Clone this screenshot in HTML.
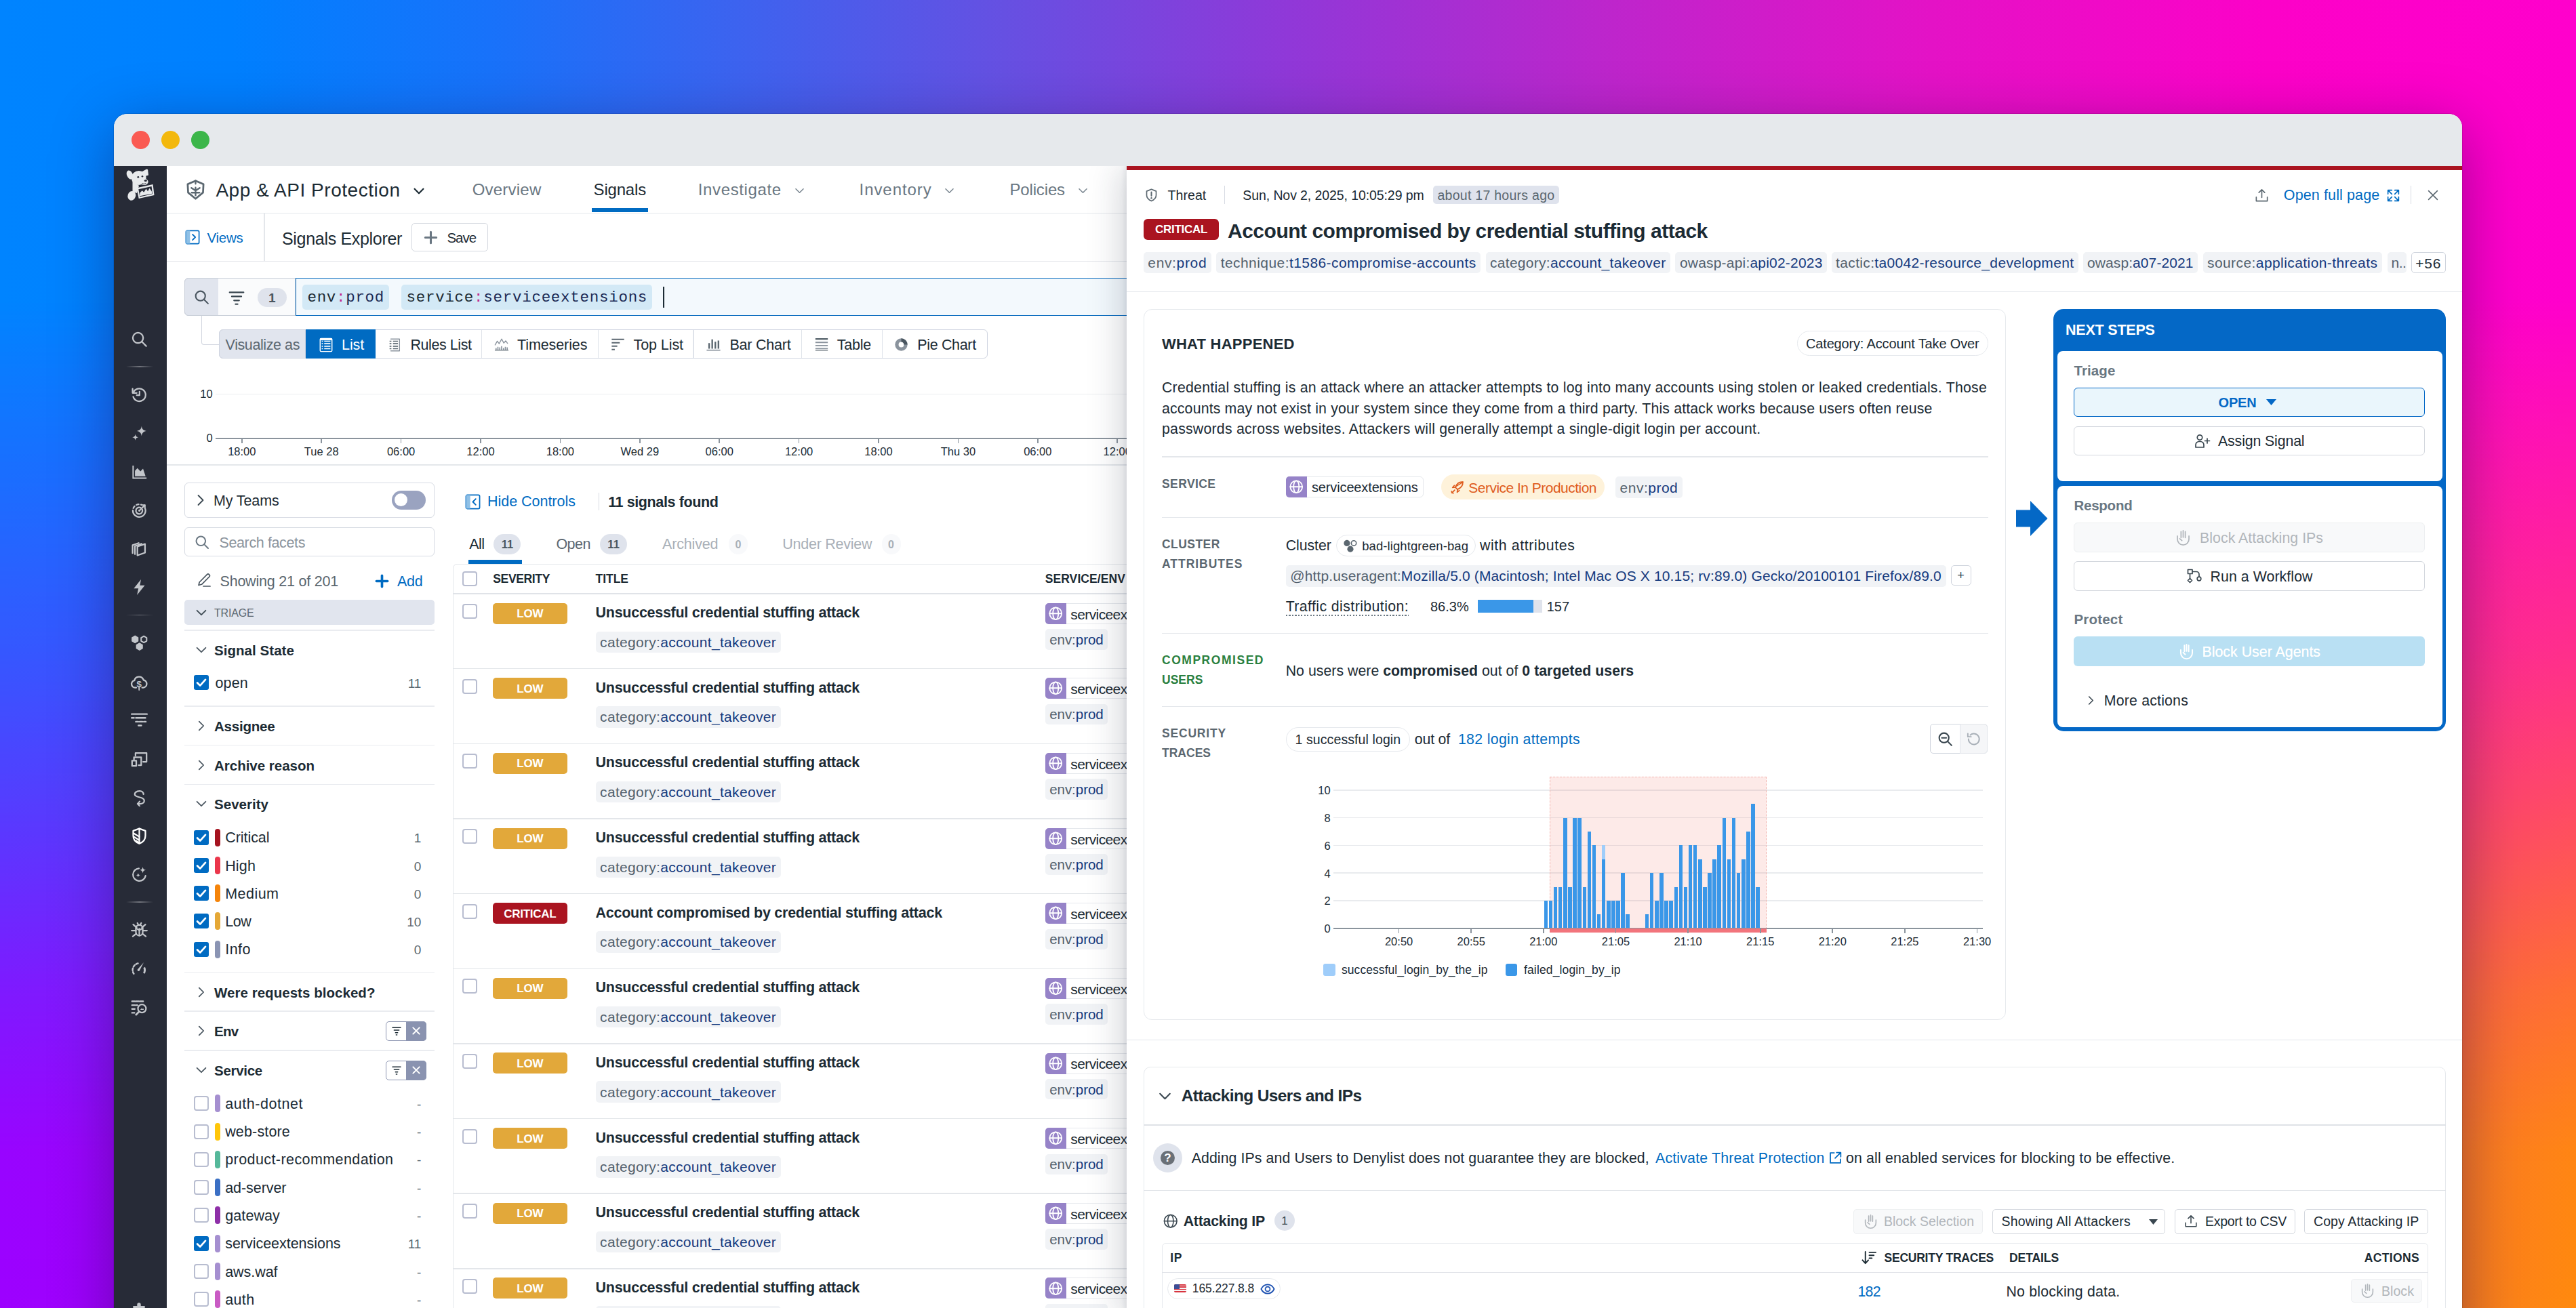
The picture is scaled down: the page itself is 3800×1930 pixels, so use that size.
<!DOCTYPE html>
<html lang="en"><head><meta charset="utf-8"><title>Signals Explorer</title>
<style>
html,body{margin:0;padding:0;width:3800px;height:1930px;overflow:hidden;}
body{position:relative;font-family:"Liberation Sans",sans-serif;background:#7a3fe0;}
#root{position:relative;width:3800px;height:1930px;overflow:hidden;}
.b{position:absolute;box-sizing:border-box;display:block;}
.t{position:absolute;white-space:nowrap;display:block;}
</style></head>
<body>
<div id="root">
<div class="b" style="left:0;top:0;width:3800px;height:1930px;background:linear-gradient(90deg,#9d00ff 0%,#b012ea 30%,#e63c8c 70%,#ff8a0e 100%);"></div>
<div class="b" style="left:0;top:0;width:3800px;height:1930px;background:linear-gradient(90deg,#0084ff 0%,#0080ff 9%,#1872fa 19%,#3a64f0 28%,#6650e2 39%,#9038d8 50%,#bc26cc 62%,#e412c6 75%,#fc02c8 88%,#ff00cc 100%);-webkit-mask-image:linear-gradient(180deg,#000 0%,#000 23%,rgba(0,0,0,.81) 38%,rgba(0,0,0,.66) 50%,rgba(0,0,0,.47) 61%,rgba(0,0,0,.19) 76%,rgba(0,0,0,.03) 88%,transparent 100%);mask-image:linear-gradient(180deg,#000 0%,#000 23%,rgba(0,0,0,.81) 38%,rgba(0,0,0,.66) 50%,rgba(0,0,0,.47) 61%,rgba(0,0,0,.19) 76%,rgba(0,0,0,.03) 88%,transparent 100%);"></div>
<div class="b" style="left:168px;top:168px;width:3464px;height:1900px;border-radius:20px 20px 0 0;background:#fff;box-shadow:0 22px 90px rgba(20,0,60,.4),0 0 0 1px rgba(0,0,0,.1);overflow:hidden;"><div class="b" style="left:0;top:0;width:100%;height:77px;background:#e6e9ec;"></div><div class="b" style="left:0;top:77px;width:78px;height:1823px;background:#272b37;"></div></div>
<div class="b" style="left:193.8px;top:193.1px;width:27.0px;height:27.0px;background:#fa5a52;border-radius:14px;"></div>
<div class="b" style="left:237.8px;top:193.1px;width:27.0px;height:27.0px;background:#f3b80c;border-radius:14px;"></div>
<div class="b" style="left:281.5px;top:193.1px;width:27.0px;height:27.0px;background:#3cb64a;border-radius:14px;"></div>
<svg class="b" style="left:185.0px;top:248.0px;" width="46" height="50" viewBox="185 248 46 50"><g fill="#e8eaec"><ellipse cx="191.500" cy="258" rx="4.300" ry="6.800" transform="rotate(-24 191.500 258)"/><ellipse cx="204.800" cy="262.500" rx="10.800" ry="10.500"/><path d="M209 253.500 215.800 249.800c1.500-.6 2.200.2 2.400 1.500l.8 7.200-5 1.500z"/><ellipse cx="212.800" cy="268.300" rx="5.800" ry="4.800"/><path d="M195.500 266 205 274l-3 11-6.500-2z"/><ellipse cx="194.300" cy="288.800" rx="5.800" ry="7" transform="rotate(18 194.300 288.800)"/><path d="M201.600 277.300 225.600 272l1.900 15.900-22.800 5.200z"/></g><path d="M204.300 279.200 223.600 274.900l1.300 11.300-18.600 4.200z" fill="#272b37"/><path d="M206.200 289.300l.2-4.800 3.300-3.200 2.600 2.400 3.200-5.200 2.600 3.800 2.400-4.600 3.300 4.500.4 3.500z" fill="#e8eaec"/><circle cx="203.800" cy="261.300" r="1.400" fill="#272b37"/><circle cx="210" cy="260.300" r="1.300" fill="#272b37"/><ellipse cx="214.800" cy="266.500" rx="2.100" ry="1.600" fill="#272b37"/><path d="M209.500 270.500c2 1.300 4 1.200 6-.2" fill="none" stroke="#272b37" stroke-width="1"/></svg>
<svg class="b" style="left:191.5px;top:487.0px;" width="27" height="27" viewBox="0 0 24 24"><circle cx="10.3" cy="10.3" r="6.8" fill="none" stroke="#c3c6cb" stroke-width="2" stroke-linecap="round" stroke-linejoin="round" /><path d="M15.4 15.4 21 21" fill="none" stroke="#c3c6cb" stroke-width="2" stroke-linecap="round" stroke-linejoin="round" /></svg>
<div class="b" style="left:186.0px;top:540.3px;width:40.0px;height:1.6px;background:linear-gradient(90deg,rgba(255,255,255,0),rgba(255,255,255,.35),rgba(255,255,255,0));"></div>
<svg class="b" style="left:191.5px;top:568.9px;" width="27" height="27" viewBox="0 0 24 24"><path d="M4.2 9.2A8.3 8.3 0 1 1 4 14.5" fill="none" stroke="#c3c6cb" stroke-width="2" stroke-linecap="round" stroke-linejoin="round" /><path d="M3.2 4.2v5.4h5.4" fill="none" stroke="#c3c6cb" stroke-width="2" stroke-linecap="round" stroke-linejoin="round" /><path d="M12.3 7.8v4.8H8.6" fill="none" stroke="#c3c6cb" stroke-width="2" stroke-linecap="round" stroke-linejoin="round" /></svg>
<svg class="b" style="left:191.5px;top:625.9px;" width="27" height="27" viewBox="0 0 24 24"><path d="M15 2.5c.6 4 2.2 5.7 6.3 6.4-4.1.7-5.7 2.4-6.3 6.4-.6-4-2.2-5.700-6.300-6.400C12.800 8.200 14.400 6.500 15 2.500z" fill="#c3c6cb"/><path d="M6.800 13c.4 2.600 1.400 3.600 4 4-2.600.4-3.600 1.400-4 4-.4-2.600-1.400-3.600-4-4 2.600-.4 3.600-1.400 4-4z" fill="#c3c6cb"/></svg>
<svg class="b" style="left:191.5px;top:683.0px;" width="27" height="27" viewBox="0 0 24 24"><path d="M3 3.500h1.800V19H21.500v1.800H3z" fill="#c3c6cb"/><path d="M6.300 17.500V10.500l3.200-3.700 4 4.400 3.400-3.600 3.300 9.900z" fill="#c3c6cb"/></svg>
<svg class="b" style="left:191.5px;top:740.0px;" width="27" height="27" viewBox="0 0 24 24"><path d="M19.200 8.200A8.300 8.300 0 1 1 15.600 4.600" fill="none" stroke="#c3c6cb" stroke-width="2" stroke-linecap="round" stroke-linejoin="round" stroke-dasharray='30 3 3 3 3 3'/><path d="M15.800 10.400A4.300 4.300 0 1 1 13.600 8.100" fill="none" stroke="#c3c6cb" stroke-width="2" stroke-linecap="round" stroke-linejoin="round" /><circle cx="12" cy="12" r="1.300" fill="#c3c6cb"/><path d="M12 12 19 5" fill="none" stroke="#c3c6cb" stroke-width="2" stroke-linecap="round" stroke-linejoin="round" /><path d="M16.500 4.500h3v3" fill="none" stroke="#c3c6cb" stroke-width="1.6" stroke-linecap="round" stroke-linejoin="round" /></svg>
<svg class="b" style="left:191.5px;top:797.0px;" width="27" height="27" viewBox="0 0 24 24"><path d="M9.500 8.500 19.500 5v11.500L9.500 20z" fill="none" stroke="#c3c6cb" stroke-width="2" stroke-linecap="round" stroke-linejoin="round" /><path d="M6.300 18.500V7.800L15 4.800" fill="none" stroke="#c3c6cb" stroke-width="2" stroke-linecap="round" stroke-linejoin="round" /><path d="M3.200 17V6.600l8-2.800" fill="none" stroke="#c3c6cb" stroke-width="2" stroke-linecap="round" stroke-linejoin="round" /></svg>
<svg class="b" style="left:191.5px;top:853.0px;" width="27" height="27" viewBox="0 0 24 24"><path d="M14.200 1.800 4.800 13.600h6L9 22.200l10.200-12.600h-6.400z" fill="#c3c6cb"/></svg>
<div class="b" style="left:186.0px;top:906.6px;width:40.0px;height:1.6px;background:linear-gradient(90deg,rgba(255,255,255,0),rgba(255,255,255,.35),rgba(255,255,255,0));"></div>
<svg class="b" style="left:191.5px;top:935.2px;" width="27" height="27" viewBox="0 0 24 24"><polygon points="6.4,2.3 10.9,4.9 10.9,10.1 6.4,12.7 1.9,10.1 1.9,4.9" fill="#c3c6cb"/><polygon points="12.2,11.8 16.7,14.4 16.7,19.6 12.2,22.2 7.7,19.6 7.7,14.4" fill="#c3c6cb"/><polygon points="18.0,3.3 21.6,5.4 21.6,9.6 18.0,11.7 14.4,9.6 14.4,5.4" fill="none" stroke="#c3c6cb" stroke-width="1.8" stroke-linecap="round" stroke-linejoin="round" /></svg>
<svg class="b" style="left:191.0px;top:992.5px;" width="28" height="28" viewBox="0 0 24 24"><path d="M8.500 18.500H7a4.500 4.500 0 0 1-.8-8.900 6 6 0 0 1 11.600-.6A4.800 4.800 0 0 1 17.500 18.500H16" fill="none" stroke="#c3c6cb" stroke-width="2" stroke-linecap="round" stroke-linejoin="round" /><text x="12.200" y="17.800" font-size="11.500" font-weight="700" text-anchor="middle" fill="#c3c6cb" font-family="Liberation Sans,sans-serif">$</text><path d="M12.200 18.500v3" fill="none" stroke="#c3c6cb" stroke-width="1.6" stroke-linecap="round" stroke-linejoin="round" /></svg>
<svg class="b" style="left:191.5px;top:1048.0px;" width="27" height="27" viewBox="0 0 24 24"><path d="M2 5h20" fill="none" stroke="#c3c6cb" stroke-width="2.2" stroke-linecap="round" stroke-linejoin="round" stroke-linecap='butt'/><path d="M2 10h3M7.500 10h12.500" fill="none" stroke="#c3c6cb" stroke-width="2.2" stroke-linecap="round" stroke-linejoin="round" stroke-linecap='butt'/><path d="M7.500 15h3M12.500 15h3.500M18 15h2.500" fill="none" stroke="#c3c6cb" stroke-width="2.2" stroke-linecap="round" stroke-linejoin="round" stroke-linecap='butt'/><path d="M11 20h3.500" fill="none" stroke="#c3c6cb" stroke-width="2.2" stroke-linecap="round" stroke-linejoin="round" stroke-linecap='butt'/></svg>
<svg class="b" style="left:191.5px;top:1105.8px;" width="27" height="27" viewBox="0 0 24 24"><path d="M7 8V4.500h14.500v11.500H17" fill="none" stroke="#c3c6cb" stroke-width="2" stroke-linecap="round" stroke-linejoin="round" stroke-linejoin='miter'/><path d="M5 13v-3h9.500v10.500H11" fill="none" stroke="#c3c6cb" stroke-width="2" stroke-linecap="round" stroke-linejoin="round" stroke-linejoin='miter'/><rect x="2.500" y="14.500" width="5.500" height="7" fill="none" stroke="#c3c6cb" stroke-width="2" stroke-linecap="round" stroke-linejoin="round" stroke-linejoin='miter'/></svg>
<svg class="b" style="left:191.5px;top:1162.8px;" width="27" height="27" viewBox="0 0 24 24"><path d="M17.500 8A5 4.200 0 0 0 12.500 3.600C7.500 3.600 6 6.500 6 8c0 5 12.500 2.500 12.500 8.500 0 2-2 4-5.500 4h-3" fill="none" stroke="#c3c6cb" stroke-width="2" stroke-linecap="round" stroke-linejoin="round" /><path d="M12.500 17.300 9.600 20.500l2.900 3" fill="none" stroke="#c3c6cb" stroke-width="1.8" stroke-linecap="round" stroke-linejoin="round" /></svg>
<svg class="b" style="left:191.5px;top:1220.2px;" width="27" height="27" viewBox="0 0 24 24"><path d="M12 2.300 20 5.200v6.500c0 5-3.500 8.500-8 10.200-4.500-1.700-8-5.200-8-10.200V5.200z" fill="none" stroke="#ffffff" stroke-width="2" stroke-linecap="round" stroke-linejoin="round" /><path d="M12 2.300V21.900" fill="none" stroke="#ffffff" stroke-width="2" stroke-linecap="round" stroke-linejoin="round" /><path d="M4.500 8.500 12 13M4.800 13 12 17.500M7.500 18.300 12 21" fill="none" stroke="#ffffff" stroke-width="2" stroke-linecap="round" stroke-linejoin="round" /></svg>
<svg class="b" style="left:191.5px;top:1276.5px;" width="27" height="27" viewBox="0 0 24 24"><path d="M20.200 13.500A8.300 8.300 0 1 1 11.500 3.800" fill="none" stroke="#c3c6cb" stroke-width="2" stroke-linecap="round" stroke-linejoin="round" /><path d="M16.500 2c.4 2.600 1.500 3.600 4 4-2.500.4-3.600 1.400-4 4-.4-2.600-1.500-3.600-4-4 2.500-.4 3.600-1.400 4-4z" fill="#c3c6cb"/><path d="M10.500 10c.3 1.800 1 2.500 2.800 2.800-1.800.3-2.500 1-2.800 2.800-.3-1.800-1-2.500-2.800-2.800 1.800-.3 2.500-1 2.800-2.800z" fill="#c3c6cb"/></svg>
<div class="b" style="left:186.0px;top:1330.2px;width:40.0px;height:1.6px;background:linear-gradient(90deg,rgba(255,255,255,0),rgba(255,255,255,.35),rgba(255,255,255,0));"></div>
<svg class="b" style="left:191.5px;top:1358.1px;" width="27" height="27" viewBox="0 0 24 24"><path d="M7.500 10.500a4.500 4.500 0 0 1 9 0v5a4.500 4.500 0 0 1-9 0z" fill="none" stroke="#c3c6cb" stroke-width="2" stroke-linecap="round" stroke-linejoin="round" /><path d="M12 11v9" fill="none" stroke="#c3c6cb" stroke-width="2" stroke-linecap="round" stroke-linejoin="round" /><path d="M8 10.500 12 13l4-2.500" fill="none" stroke="#c3c6cb" stroke-width="1.8" stroke-linecap="round" stroke-linejoin="round" /><path d="M2 13.500h5.500M16.500 13.500H22M3.500 21l4.500-3.500M20.500 21 16 17.500M4 5.500l4.500 4M20 5.500l-4.500 4M9.500 3.500l1.300 2.500M14.500 3.500 13.200 6" fill="none" stroke="#c3c6cb" stroke-width="2" stroke-linecap="round" stroke-linejoin="round" /></svg>
<svg class="b" style="left:191.5px;top:1415.9px;" width="27" height="27" viewBox="0 0 24 24"><path d="M4.800 18.500A8.800 8.800 0 0 1 11 4.800" fill="none" stroke="#c3c6cb" stroke-width="2.2" stroke-linecap="round" stroke-linejoin="round" stroke-dasharray='2.600 2.200' stroke-linecap='butt'/><path d="M17.800 3.500 12.300 14.500a1.600 1.600 0 0 1-2.800-1.300z" fill="#c3c6cb"/><path d="M19.500 9.500c1.500 3 1.300 6-.3 9l-2.200-1.200c1-2.300 1.200-4.300.3-6.500z" fill="#c3c6cb"/></svg>
<svg class="b" style="left:191.5px;top:1472.7px;" width="27" height="27" viewBox="0 0 24 24"><path d="M2.500 4h3.500M7.500 4h4M13 4h4M2.500 9h3.500M7.500 9h2M2.500 14h3.500M2.500 19h3" fill="none" stroke="#c3c6cb" stroke-width="2.2" stroke-linecap="round" stroke-linejoin="round" stroke-linecap='butt'/><circle cx="15.500" cy="13.500" r="5.300" fill="none" stroke="#c3c6cb" stroke-width="2" stroke-linecap="round" stroke-linejoin="round" /><path d="M11.600 17.600 7.800 21.500" fill="none" stroke="#c3c6cb" stroke-width="2.4" stroke-linecap="round" stroke-linejoin="round" /><path d="M13.300 15l1.500-2 1.200 1.200 1-1.200 1 2z" fill="#c3c6cb"/></svg>
<svg class="b" style="left:192.0px;top:1915.0px;" width="26" height="26" viewBox="0 0 24 24"><path d="M4 11h5.500V9.300a2.500 2.500 0 1 1 5 0V11H20v11H4z" fill="#c3c6cb"/></svg>
<svg class="b" style="left:273.0px;top:263.5px;" width="31" height="32" viewBox="0 0 24 24"><path d="M12 1.700 21 5.700 20.500 15.200 12 22.300 3.500 15.200 3 5.700z" fill="none" stroke="#5b6770" stroke-width="2.1" stroke-linecap="round" stroke-linejoin="round" /><path d="M12 9.500v9M12 13 7.200 9.800M12 13l4.800-3.200M7.500 15.300h9M12 1.700v3.500" fill="none" stroke="#5b6770" stroke-width="1.8" stroke-linecap="round" stroke-linejoin="round" /></svg>
<span class="t" style="letter-spacing:0.53px;top:262.7px;font-size:28px;line-height:36px;color:#1c2b34;left:318.4px;">App &amp; API Protection</span>
<svg class="b" style="left:607.0px;top:270.5px;" width="22" height="22" viewBox="0 0 24 24"><path d="M5 8.500 12 15.500 19 8.500" fill="none" stroke="#1c2b34" stroke-width="2.4" stroke-linecap="round" stroke-linejoin="round" /></svg>
<span class="t" style="letter-spacing:0.22px;top:264.1px;font-size:24px;line-height:31px;color:#6a7782;left:696.7px;">Overview</span>
<span class="t" style="letter-spacing:-0.19px;top:264.1px;font-size:24px;line-height:31px;color:#1c2b34;left:875.6px;">Signals</span>
<div class="b" style="left:873.0px;top:307.2px;width:82.8px;height:5.8px;background:#006bc2;"></div>
<span class="t" style="letter-spacing:0.63px;top:264.1px;font-size:24px;line-height:31px;color:#6a7782;left:1029.8px;">Investigate</span>
<svg class="b" style="left:1169.5px;top:272.0px;" width="19" height="19" viewBox="0 0 24 24"><path d="M5 8.500 12 15.500 19 8.500" fill="none" stroke="#7b8791" stroke-width="2" stroke-linecap="round" stroke-linejoin="round" /></svg>
<span class="t" style="letter-spacing:0.92px;top:264.1px;font-size:24px;line-height:31px;color:#6a7782;left:1267.6px;">Inventory</span>
<svg class="b" style="left:1390.5px;top:272.0px;" width="19" height="19" viewBox="0 0 24 24"><path d="M5 8.500 12 15.500 19 8.500" fill="none" stroke="#7b8791" stroke-width="2" stroke-linecap="round" stroke-linejoin="round" /></svg>
<span class="t" style="letter-spacing:-0.14px;top:264.1px;font-size:24px;line-height:31px;color:#6a7782;left:1489.4px;">Policies</span>
<svg class="b" style="left:1587.5px;top:272.0px;" width="19" height="19" viewBox="0 0 24 24"><path d="M5 8.500 12 15.500 19 8.500" fill="none" stroke="#7b8791" stroke-width="2" stroke-linecap="round" stroke-linejoin="round" /></svg>
<div class="b" style="left:246.0px;top:313.9px;width:1416.0px;height:1.5px;background:#e4e7eb;"></div>
<svg class="b" style="left:272.5px;top:339.0px;" width="22" height="22" viewBox="0 0 24 24"><rect x="1.500" y="1.500" width="21" height="21" rx="2" fill="none" stroke="#006bc2" stroke-width="1.8" stroke-linecap="round" stroke-linejoin="round" /><rect x="1.500" y="1.500" width="6.500" height="21" fill="#8fc0e6"/><path d="M12 7.500 16.500 12 12 16.500" fill="none" stroke="#006bc2" stroke-width="2" stroke-linecap="round" stroke-linejoin="round" /></svg>
<span class="t" style="letter-spacing:-0.21px;top:337.0px;font-size:20.5px;line-height:27px;color:#006bc2;left:305.4px;">Views</span>
<div class="b" style="left:389.2px;top:315.0px;width:1.5px;height:70.5px;background:#e4e7eb;"></div>
<span class="t" style="letter-spacing:-0.31px;top:335.8px;font-size:25px;line-height:32px;color:#1c2b34;left:416.0px;">Signals Explorer</span>
<div class="b" style="left:606.5px;top:328.5px;width:113.7px;height:42.8px;background:#fff;border:1.5px solid #d3d7de;border-radius:5px;"></div>
<svg class="b" style="left:623.5px;top:338.5px;" width="23" height="23" viewBox="0 0 24 24"><path d="M12 3.500v17M3.500 12h17" fill="none" stroke="#6a7782" stroke-width="3.2" stroke-linecap="round" stroke-linejoin="round" stroke-linecap='butt'/></svg>
<span class="t" style="letter-spacing:-0.96px;top:337.0px;font-size:20.5px;line-height:27px;color:#1c2b34;left:659.4px;">Save</span>
<div class="b" style="left:246.0px;top:384.8px;width:1416.0px;height:1.5px;background:#e4e7eb;"></div>
<div class="b" style="left:271.8px;top:409.8px;width:1400.0px;height:56.0px;background:#f3f9fd;border:1.5px solid #c9cfd9;border-radius:6px 0 0 6px;"></div>
<div class="b" style="left:271.8px;top:409.8px;width:51.0px;height:56.0px;background:#e1e5ee;border:1.5px solid #c9cfd9;border-radius:6px 0 0 6px;"></div>
<div class="b" style="left:322.2px;top:409.8px;width:114.0px;height:56.0px;background:#fafbfc;border:1.5px solid #c9cfd9;border-left:none;"></div>
<div class="b" style="left:435.8px;top:409.8px;width:1300.0px;height:56.0px;background:#f3f9fd;border:1.8px solid #0a6cbf;"></div>
<svg class="b" style="left:285.0px;top:426.0px;" width="25" height="25" viewBox="0 0 24 24"><circle cx="10.3" cy="10.3" r="6.8" fill="none" stroke="#4a5660" stroke-width="2" stroke-linecap="round" stroke-linejoin="round" /><path d="M15.4 15.4 21 21" fill="none" stroke="#4a5660" stroke-width="2" stroke-linecap="round" stroke-linejoin="round" /></svg>
<svg class="b" style="left:336.0px;top:425.5px;" width="26" height="26" viewBox="0 0 24 24"><path d="M2.500 5h19M5.500 10.500h13M8.500 16h7M10.500 21h3" fill="none" stroke="#3a4750" stroke-width="2" stroke-linecap="round" stroke-linejoin="round" stroke-linecap='butt'/></svg>
<div class="b" style="left:379.9px;top:424.6px;width:43.0px;height:28.0px;background:#dfe3ec;border-radius:14px;"></div>
<span class="t" style="top:426.8px;font-size:19px;line-height:25px;color:#4a5660;font-weight:700;left:401.4px;transform:translateX(-50%);">1</span>
<div class="b" style="left:446.2px;top:420.2px;width:127.5px;height:36.8px;background:#d3e9f6;border-radius:5px;"></div>
<span class="t" style="letter-spacing:0.68px;top:425.1px;font-size:22.5px;line-height:29px;color:#1c2b34;font-family:'Liberation Mono',monospace;left:453.5px;"><span style="color:#1c2b34;">env</span><span style="color:#c0288f;">:</span><span style="color:#1b2a55;">prod</span></span>
<div class="b" style="left:592.4px;top:420.2px;width:369.6px;height:36.8px;background:#d3e9f6;border-radius:5px;"></div>
<span class="t" style="letter-spacing:0.72px;top:425.1px;font-size:22.5px;line-height:29px;color:#1c2b34;font-family:'Liberation Mono',monospace;left:599.5px;"><span style="color:#1c2b34;">service</span><span style="color:#c0288f;">:</span><span style="color:#1b2a55;">serviceextensions</span></span>
<div class="b" style="left:978.2px;top:422.8px;width:1.6px;height:31.6px;background:#1c2b34;"></div>
<div class="b" style="left:297.2px;top:466.0px;width:26.0px;height:43.2px;border:1.5px solid #d3d7e0;border-radius:0 0 0 4px;border-top:none;border-right:none;"></div>
<div class="b" style="left:322.9px;top:485.9px;width:1133.7px;height:43.4px;background:#fff;border:1.5px solid #cfd4e0;border-radius:6px;"></div>
<div class="b" style="left:322.9px;top:485.9px;width:128.5px;height:43.4px;background:#e1e5ee;border:1.5px solid #cfd4e0;border-radius:6px 0 0 6px;"></div>
<span class="t" style="letter-spacing:-0.41px;top:494.8px;font-size:21.5px;line-height:28px;color:#5b6770;left:332.6px;">Visualize as</span>
<div class="b" style="left:451.0px;top:485.9px;width:103.0px;height:43.4px;background:#006bc2;"></div>
<svg class="b" style="left:470.0px;top:496.5px;" width="22" height="24" viewBox="0 0 24 24"><rect x="2.500" y="1.500" width="19" height="21" rx="1.500" fill="none" stroke="#ffffff" stroke-width="1.600"/><path d="M5 6h2M9 6h10M5 10h2M9 10h10M5 14h2M9 14h10M5 18h2M9 18h10" stroke="#ffffff" stroke-width="1.800" fill="none"/><rect x="2.500" y="1.500" width="19" height="3" fill="#ffffff"/></svg>
<span class="t" style="letter-spacing:-0.07px;top:494.8px;font-size:21.5px;line-height:28px;color:#fff;left:504.0px;">List</span>
<div class="b" style="left:709.8px;top:486.9px;width:1.5px;height:41.4px;background:#dfe3ea;"></div>
<div class="b" style="left:881.5px;top:486.9px;width:1.5px;height:41.4px;background:#dfe3ea;"></div>
<div class="b" style="left:1022.0px;top:486.9px;width:1.5px;height:41.4px;background:#dfe3ea;"></div>
<div class="b" style="left:1181.8px;top:486.9px;width:1.5px;height:41.4px;background:#dfe3ea;"></div>
<div class="b" style="left:1300.5px;top:486.9px;width:1.5px;height:41.4px;background:#dfe3ea;"></div>
<svg class="b" style="left:570.5px;top:496.5px;" width="22" height="24" viewBox="0 0 24 24"><path d="M6 2.500h14v19H6" fill="none" stroke="#8a939d" stroke-width="1.5" stroke-linecap="round" stroke-linejoin="round" /><path d="M4 6h3M9.500 6h8M4 10h3M9.500 10h8M4 14h3M9.500 14h8M4 18h3M9.500 18h8" stroke="#5b6770" stroke-width="1.800" fill="none"/></svg>
<span class="t" style="letter-spacing:-0.42px;top:494.8px;font-size:21.5px;line-height:28px;color:#1c2b34;left:605.4px;">Rules List</span>
<svg class="b" style="left:728.0px;top:497.0px;" width="24" height="22" viewBox="0 0 24 24"><path d="M1.500 13 5 7l3 4 4-7.500 3.500 6.500 3-3.500 3 4" fill="none" stroke="#8a939d" stroke-width="1.5" stroke-linecap="round" stroke-linejoin="round" /><path d="M3 21v-3M6 21v-5M9 21v-4M12 21v-6M15 21v-3M18 21v-5M21 21v-4" stroke="#8a939d" stroke-width="1.800"/><path d="M1 21.500h22" stroke="#5b6770" stroke-width="1.300"/></svg>
<span class="t" style="letter-spacing:-0.10px;top:494.8px;font-size:21.5px;line-height:28px;color:#1c2b34;left:763.0px;">Timeseries</span>
<svg class="b" style="left:899.5px;top:497.0px;" width="23" height="22" viewBox="0 0 24 24"><path d="M2 4h20M2 9.500h13M2 15h9M2 20.500h5" stroke="#5b6770" stroke-width="2.200" fill="none"/></svg>
<span class="t" style="letter-spacing:-0.08px;top:494.8px;font-size:21.5px;line-height:28px;color:#1c2b34;left:934.5px;">Top List</span>
<svg class="b" style="left:1041.0px;top:497.0px;" width="23" height="22" viewBox="0 0 24 24"><path d="M5 19V10M10 19V4M15 19V8M20 19V6" stroke="#5b6770" stroke-width="2.600" fill="none"/><path d="M1 21.500h22" stroke="#8a939d" stroke-width="1.800"/></svg>
<span class="t" style="letter-spacing:-0.20px;top:494.8px;font-size:21.5px;line-height:28px;color:#1c2b34;left:1076.4px;">Bar Chart</span>
<svg class="b" style="left:1200.5px;top:497.0px;" width="22" height="22" viewBox="0 0 24 24"><path d="M2 3.500h20" stroke="#5b6770" stroke-width="2.600"/><path d="M2 9h20M2 14h20M2 19h20" stroke="#8a939d" stroke-width="2"/><path d="M2 21.800h20" stroke="#5b6770" stroke-width="1.200"/></svg>
<span class="t" style="letter-spacing:-0.24px;top:494.8px;font-size:21.5px;line-height:28px;color:#1c2b34;left:1234.8px;">Table</span>
<svg class="b" style="left:1319.0px;top:497.5px;" width="21" height="21" viewBox="0 0 24 24"><circle cx="12" cy="12" r="7.500" fill="none" stroke="#8a939d" stroke-width="6"/><path d="M12 4.500A7.500 7.500 0 0 1 19.500 12" fill="none" stroke="#4a5660" stroke-width="6"/></svg>
<span class="t" style="letter-spacing:-0.35px;top:494.8px;font-size:21.5px;line-height:28px;color:#1c2b34;left:1353.3px;">Pie Chart</span>
<span class="t" style="top:571.1px;font-size:16.5px;line-height:21px;color:#1c2b34;right:3486.4px;">10</span>
<span class="t" style="top:636.1px;font-size:16.5px;line-height:21px;color:#1c2b34;right:3486.4px;">0</span>
<div class="b" style="left:318.4px;top:580.9px;width:1343.6px;height:1.5px;background:#eceef1;"></div>
<div class="b" style="left:318.4px;top:645.5px;width:1343.6px;height:2.0px;background:#8b949d;"></div>
<div class="b" style="left:355.9px;top:646.5px;width:1.8px;height:7.0px;background:#8b949d;"></div>
<span class="t" style="top:655.7px;font-size:16.5px;line-height:21px;color:#1c2b34;left:356.8px;transform:translateX(-50%);">18:00</span>
<div class="b" style="left:473.3px;top:646.5px;width:1.8px;height:7.0px;background:#8b949d;"></div>
<span class="t" style="top:655.7px;font-size:16.5px;line-height:21px;color:#1c2b34;left:474.2px;transform:translateX(-50%);">Tue 28</span>
<div class="b" style="left:590.7px;top:646.5px;width:1.8px;height:7.0px;background:#8b949d;"></div>
<span class="t" style="top:655.7px;font-size:16.5px;line-height:21px;color:#1c2b34;left:591.6px;transform:translateX(-50%);">06:00</span>
<div class="b" style="left:708.1px;top:646.5px;width:1.8px;height:7.0px;background:#8b949d;"></div>
<span class="t" style="top:655.7px;font-size:16.5px;line-height:21px;color:#1c2b34;left:709.0px;transform:translateX(-50%);">12:00</span>
<div class="b" style="left:825.5px;top:646.5px;width:1.8px;height:7.0px;background:#8b949d;"></div>
<span class="t" style="top:655.7px;font-size:16.5px;line-height:21px;color:#1c2b34;left:826.4px;transform:translateX(-50%);">18:00</span>
<div class="b" style="left:942.9px;top:646.5px;width:1.8px;height:7.0px;background:#8b949d;"></div>
<span class="t" style="top:655.7px;font-size:16.5px;line-height:21px;color:#1c2b34;left:943.8px;transform:translateX(-50%);">Wed 29</span>
<div class="b" style="left:1060.3px;top:646.5px;width:1.8px;height:7.0px;background:#8b949d;"></div>
<span class="t" style="top:655.7px;font-size:16.5px;line-height:21px;color:#1c2b34;left:1061.2px;transform:translateX(-50%);">06:00</span>
<div class="b" style="left:1177.7px;top:646.5px;width:1.8px;height:7.0px;background:#8b949d;"></div>
<span class="t" style="top:655.7px;font-size:16.5px;line-height:21px;color:#1c2b34;left:1178.6px;transform:translateX(-50%);">12:00</span>
<div class="b" style="left:1295.1px;top:646.5px;width:1.8px;height:7.0px;background:#8b949d;"></div>
<span class="t" style="top:655.7px;font-size:16.5px;line-height:21px;color:#1c2b34;left:1296.0px;transform:translateX(-50%);">18:00</span>
<div class="b" style="left:1412.5px;top:646.5px;width:1.8px;height:7.0px;background:#8b949d;"></div>
<span class="t" style="top:655.7px;font-size:16.5px;line-height:21px;color:#1c2b34;left:1413.4px;transform:translateX(-50%);">Thu 30</span>
<div class="b" style="left:1529.9px;top:646.5px;width:1.8px;height:7.0px;background:#8b949d;"></div>
<span class="t" style="top:655.7px;font-size:16.5px;line-height:21px;color:#1c2b34;left:1530.8px;transform:translateX(-50%);">06:00</span>
<div class="b" style="left:1647.3px;top:646.5px;width:1.8px;height:7.0px;background:#8b949d;"></div>
<span class="t" style="top:655.7px;font-size:16.5px;line-height:21px;color:#1c2b34;left:1648.2px;transform:translateX(-50%);">12:00</span>
<div class="b" style="left:246.0px;top:685.2px;width:1416.0px;height:1.5px;background:#e4e7eb;"></div>
<div class="b" style="left:271.8px;top:712.0px;width:369.7px;height:52.2px;background:#fff;border:1.5px solid #d7dbe3;border-radius:6px;"></div>
<svg class="b" style="left:284.0px;top:726.0px;" width="24" height="24" viewBox="0 0 24 24"><path d="M8.500 5 15.500 12 8.500 19" fill="none" stroke="#3a4750" stroke-width="1.8" stroke-linecap="round" stroke-linejoin="round" /></svg>
<span class="t" style="letter-spacing:-0.13px;top:724.5px;font-size:21.5px;line-height:28px;color:#1c2b34;left:315.0px;">My Teams</span>
<div class="b" style="left:577.6px;top:723.5px;width:50.5px;height:28.0px;background:#9aa3c0;border-radius:14px;"></div>
<div class="b" style="left:581.8px;top:727.7px;width:19.6px;height:19.6px;background:#fff;border-radius:10px;"></div>
<div class="b" style="left:271.8px;top:778.0px;width:369.7px;height:43.0px;background:#fff;border:1.5px solid #d7dbe3;border-radius:6px;"></div>
<svg class="b" style="left:286.0px;top:788.0px;" width="24" height="24" viewBox="0 0 24 24"><circle cx="10.3" cy="10.3" r="6.8" fill="none" stroke="#6a7782" stroke-width="2" stroke-linecap="round" stroke-linejoin="round" /><path d="M15.4 15.4 21 21" fill="none" stroke="#6a7782" stroke-width="2" stroke-linecap="round" stroke-linejoin="round" /></svg>
<span class="t" style="letter-spacing:-0.38px;top:786.5px;font-size:21.5px;line-height:28px;color:#8b949d;left:323.5px;">Search facets</span>
<svg class="b" style="left:289.0px;top:844.0px;" width="24" height="24" viewBox="0 0 24 24"><path d="M4 19.500 5.200 15 16.500 3.700a2 2 0 0 1 2.800 0l.5.500a2 2 0 0 1 0 2.800L8.500 18.300z" fill="none" stroke="#4a5660" stroke-width="1.7" stroke-linecap="round" stroke-linejoin="round" /><path d="M11 21h10" fill="none" stroke="#4a5660" stroke-width="1.7" stroke-linecap="round" stroke-linejoin="round" /></svg>
<span class="t" style="letter-spacing:-0.21px;top:843.5px;font-size:21.5px;line-height:28px;color:#5b6770;left:324.5px;">Showing 21 of 201</span>
<svg class="b" style="left:551.5px;top:846.0px;" width="23" height="23" viewBox="0 0 24 24"><path d="M12 3.500v17M3.500 12h17" fill="none" stroke="#006bc2" stroke-width="3.8" stroke-linecap="round" stroke-linejoin="round" stroke-linecap='butt'/></svg>
<span class="t" style="letter-spacing:-0.26px;top:843.5px;font-size:21.5px;line-height:28px;color:#006bc2;left:586.0px;">Add</span>
<div class="b" style="left:271.8px;top:885.4px;width:369.7px;height:37.0px;background:#e1e5ee;border-radius:5px;"></div>
<svg class="b" style="left:285.5px;top:893.0px;" width="22" height="22" viewBox="0 0 24 24"><path d="M5 8.500 12 15.500 19 8.500" fill="none" stroke="#3a4750" stroke-width="1.9" stroke-linecap="round" stroke-linejoin="round" /></svg>
<span class="t" style="letter-spacing:-0.18px;top:894.4px;font-size:16px;line-height:21px;color:#5b6770;left:316.0px;">TRIAGE</span>
<div class="b" style="left:271.8px;top:929.0px;width:369.7px;height:1.5px;background:#eaecf0;"></div>
<svg class="b" style="left:285.5px;top:947.8px;" width="22" height="22" viewBox="0 0 24 24"><path d="M5 8.500 12 15.500 19 8.500" fill="none" stroke="#4a5660" stroke-width="1.9" stroke-linecap="round" stroke-linejoin="round" /></svg>
<span class="t" style="letter-spacing:0.05px;top:945.8px;font-size:20.5px;line-height:27px;color:#1c2b34;font-weight:700;left:316.0px;">Signal State</span>
<div class="b" style="left:285.6px;top:996.3px;width:22.0px;height:22.0px;background:#006bc2;border-radius:3px;"></div>
<svg class="b" style="left:285.6px;top:996.3px;" width="22" height="22" viewBox="0 0 24 24"><path d="M5.500 12.500 10 17 18.500 7.500" fill="none" stroke="#fff" stroke-width="3" stroke-linecap="round" stroke-linejoin="round" /></svg>
<span class="t" style="letter-spacing:0.16px;top:993.8px;font-size:21.5px;line-height:28px;color:#1c2b34;left:317.5px;">open</span>
<span class="t" style="top:996.0px;font-size:19px;line-height:25px;color:#5b6770;right:3178.6px;">11</span>
<div class="b" style="left:271.8px;top:1041.0px;width:369.7px;height:1.5px;background:#eaecf0;"></div>
<svg class="b" style="left:285.5px;top:1059.8px;" width="22" height="22" viewBox="0 0 24 24"><path d="M8.500 5 15.500 12 8.500 19" fill="none" stroke="#4a5660" stroke-width="1.9" stroke-linecap="round" stroke-linejoin="round" /></svg>
<span class="t" style="letter-spacing:-0.21px;top:1057.8px;font-size:20.5px;line-height:27px;color:#1c2b34;font-weight:700;left:316.0px;">Assignee</span>
<div class="b" style="left:271.8px;top:1098.8px;width:369.7px;height:1.5px;background:#eaecf0;"></div>
<svg class="b" style="left:285.5px;top:1117.6px;" width="22" height="22" viewBox="0 0 24 24"><path d="M8.500 5 15.500 12 8.500 19" fill="none" stroke="#4a5660" stroke-width="1.9" stroke-linecap="round" stroke-linejoin="round" /></svg>
<span class="t" style="letter-spacing:-0.01px;top:1115.6px;font-size:20.5px;line-height:27px;color:#1c2b34;font-weight:700;left:316.0px;">Archive reason</span>
<div class="b" style="left:271.8px;top:1156.5px;width:369.7px;height:1.5px;background:#eaecf0;"></div>
<svg class="b" style="left:285.5px;top:1175.4px;" width="22" height="22" viewBox="0 0 24 24"><path d="M5 8.500 12 15.500 19 8.500" fill="none" stroke="#4a5660" stroke-width="1.9" stroke-linecap="round" stroke-linejoin="round" /></svg>
<span class="t" style="letter-spacing:0.03px;top:1173.4px;font-size:20.5px;line-height:27px;color:#1c2b34;font-weight:700;left:316.0px;">Severity</span>
<div class="b" style="left:285.6px;top:1224.6px;width:22.0px;height:22.0px;background:#006bc2;border-radius:3px;"></div>
<svg class="b" style="left:285.6px;top:1224.6px;" width="22" height="22" viewBox="0 0 24 24"><path d="M5.500 12.500 10 17 18.500 7.500" fill="none" stroke="#fff" stroke-width="3" stroke-linecap="round" stroke-linejoin="round" /></svg>
<div class="b" style="left:317.3px;top:1222.6px;width:8.0px;height:26.0px;background:#a5131f;border-radius:4px;"></div>
<span class="t" style="letter-spacing:-0.05px;top:1222.1px;font-size:21.5px;line-height:28px;color:#1c2b34;left:332.2px;">Critical</span>
<span class="t" style="top:1224.1px;font-size:19px;line-height:25px;color:#5b6770;right:3178.6px;">1</span>
<div class="b" style="left:285.6px;top:1266.0px;width:22.0px;height:22.0px;background:#006bc2;border-radius:3px;"></div>
<svg class="b" style="left:285.6px;top:1266.0px;" width="22" height="22" viewBox="0 0 24 24"><path d="M5.500 12.500 10 17 18.500 7.500" fill="none" stroke="#fff" stroke-width="3" stroke-linecap="round" stroke-linejoin="round" /></svg>
<div class="b" style="left:317.3px;top:1264.0px;width:8.0px;height:26.0px;background:#eb364b;border-radius:4px;"></div>
<span class="t" style="letter-spacing:0.15px;top:1263.5px;font-size:21.5px;line-height:28px;color:#1c2b34;left:332.2px;">High</span>
<span class="t" style="top:1265.5px;font-size:19px;line-height:25px;color:#5b6770;right:3178.6px;">0</span>
<div class="b" style="left:285.6px;top:1307.2px;width:22.0px;height:22.0px;background:#006bc2;border-radius:3px;"></div>
<svg class="b" style="left:285.6px;top:1307.2px;" width="22" height="22" viewBox="0 0 24 24"><path d="M5.500 12.500 10 17 18.500 7.500" fill="none" stroke="#fff" stroke-width="3" stroke-linecap="round" stroke-linejoin="round" /></svg>
<div class="b" style="left:317.3px;top:1305.2px;width:8.0px;height:26.0px;background:#f5840a;border-radius:4px;"></div>
<span class="t" style="letter-spacing:0.47px;top:1304.7px;font-size:21.5px;line-height:28px;color:#1c2b34;left:332.2px;">Medium</span>
<span class="t" style="top:1306.7px;font-size:19px;line-height:25px;color:#5b6770;right:3178.6px;">0</span>
<div class="b" style="left:285.6px;top:1348.4px;width:22.0px;height:22.0px;background:#006bc2;border-radius:3px;"></div>
<svg class="b" style="left:285.6px;top:1348.4px;" width="22" height="22" viewBox="0 0 24 24"><path d="M5.500 12.500 10 17 18.500 7.500" fill="none" stroke="#fff" stroke-width="3" stroke-linecap="round" stroke-linejoin="round" /></svg>
<div class="b" style="left:317.3px;top:1346.4px;width:8.0px;height:26.0px;background:#e5a836;border-radius:4px;"></div>
<span class="t" style="letter-spacing:-0.38px;top:1345.9px;font-size:21.5px;line-height:28px;color:#1c2b34;left:332.2px;">Low</span>
<span class="t" style="top:1347.9px;font-size:19px;line-height:25px;color:#5b6770;right:3178.6px;">10</span>
<div class="b" style="left:285.6px;top:1389.6px;width:22.0px;height:22.0px;background:#006bc2;border-radius:3px;"></div>
<svg class="b" style="left:285.6px;top:1389.6px;" width="22" height="22" viewBox="0 0 24 24"><path d="M5.500 12.500 10 17 18.500 7.500" fill="none" stroke="#fff" stroke-width="3" stroke-linecap="round" stroke-linejoin="round" /></svg>
<div class="b" style="left:317.3px;top:1387.6px;width:8.0px;height:26.0px;background:#8a94b3;border-radius:4px;"></div>
<span class="t" style="letter-spacing:0.48px;top:1387.1px;font-size:21.5px;line-height:28px;color:#1c2b34;left:332.2px;">Info</span>
<span class="t" style="top:1389.1px;font-size:19px;line-height:25px;color:#5b6770;right:3178.6px;">0</span>
<div class="b" style="left:271.8px;top:1433.5px;width:369.7px;height:1.5px;background:#eaecf0;"></div>
<svg class="b" style="left:285.5px;top:1452.5px;" width="22" height="22" viewBox="0 0 24 24"><path d="M8.500 5 15.500 12 8.500 19" fill="none" stroke="#4a5660" stroke-width="1.9" stroke-linecap="round" stroke-linejoin="round" /></svg>
<span class="t" style="letter-spacing:0.04px;top:1450.5px;font-size:20.5px;line-height:27px;color:#1c2b34;font-weight:700;left:316.0px;">Were requests blocked?</span>
<div class="b" style="left:271.8px;top:1491.2px;width:369.7px;height:1.5px;background:#eaecf0;"></div>
<svg class="b" style="left:285.5px;top:1510.0px;" width="22" height="22" viewBox="0 0 24 24"><path d="M8.500 5 15.500 12 8.500 19" fill="none" stroke="#4a5660" stroke-width="1.9" stroke-linecap="round" stroke-linejoin="round" /></svg>
<span class="t" style="letter-spacing:-0.70px;top:1508.0px;font-size:20.5px;line-height:27px;color:#1c2b34;font-weight:700;left:316.0px;">Env</span>
<div class="b" style="left:569.2px;top:1506.5px;width:59.7px;height:29.0px;background:#fff;border:1.5px solid #8a93b0;border-radius:5px;"></div>
<div class="b" style="left:599.0px;top:1506.5px;width:29.9px;height:29.0px;background:#8a93b0;border-radius:0 5px 5px 0;"></div>
<svg class="b" style="left:576.5px;top:1513.0px;" width="16" height="16" viewBox="0 0 24 24"><path d="M3 5h18M6.500 10.500h11M9.500 16h5M11 21h2" fill="none" stroke="#1c2b34" stroke-width="2.2" stroke-linecap="round" stroke-linejoin="round" stroke-linecap='butt'/></svg>
<svg class="b" style="left:606.0px;top:1513.0px;" width="16" height="16" viewBox="0 0 24 24"><path d="M5 5 19 19M19 5 5 19" fill="none" stroke="#fff" stroke-width="3" stroke-linecap="round" stroke-linejoin="round" /></svg>
<div class="b" style="left:271.8px;top:1549.2px;width:369.7px;height:1.5px;background:#eaecf0;"></div>
<svg class="b" style="left:285.5px;top:1568.0px;" width="22" height="22" viewBox="0 0 24 24"><path d="M5 8.500 12 15.500 19 8.500" fill="none" stroke="#4a5660" stroke-width="1.9" stroke-linecap="round" stroke-linejoin="round" /></svg>
<span class="t" style="letter-spacing:-0.28px;top:1566.0px;font-size:20.5px;line-height:27px;color:#1c2b34;font-weight:700;left:316.0px;">Service</span>
<div class="b" style="left:569.2px;top:1564.5px;width:59.7px;height:29.0px;background:#fff;border:1.5px solid #8a93b0;border-radius:5px;"></div>
<div class="b" style="left:599.0px;top:1564.5px;width:29.9px;height:29.0px;background:#8a93b0;border-radius:0 5px 5px 0;"></div>
<svg class="b" style="left:576.5px;top:1571.0px;" width="16" height="16" viewBox="0 0 24 24"><path d="M3 5h18M6.500 10.500h11M9.500 16h5M11 21h2" fill="none" stroke="#1c2b34" stroke-width="2.2" stroke-linecap="round" stroke-linejoin="round" stroke-linecap='butt'/></svg>
<svg class="b" style="left:606.0px;top:1571.0px;" width="16" height="16" viewBox="0 0 24 24"><path d="M5 5 19 19M19 5 5 19" fill="none" stroke="#fff" stroke-width="3" stroke-linecap="round" stroke-linejoin="round" /></svg>
<div class="b" style="left:285.6px;top:1617.2px;width:22.0px;height:22.0px;background:#fff;border:2px solid #b8bdd0;border-radius:4px;"></div>
<div class="b" style="left:317.3px;top:1615.2px;width:8.0px;height:26.0px;background:#a58fd0;border-radius:4px;"></div>
<span class="t" style="letter-spacing:0.55px;top:1614.7px;font-size:21.5px;line-height:28px;color:#1c2b34;left:332.2px;">auth-dotnet</span>
<span class="t" style="top:1616.7px;font-size:19px;line-height:25px;color:#5b6770;right:3178.6px;">-</span>
<div class="b" style="left:285.6px;top:1658.5px;width:22.0px;height:22.0px;background:#fff;border:2px solid #b8bdd0;border-radius:4px;"></div>
<div class="b" style="left:317.3px;top:1656.5px;width:8.0px;height:26.0px;background:#ffc60a;border-radius:4px;"></div>
<span class="t" style="letter-spacing:0.15px;top:1656.0px;font-size:21.5px;line-height:28px;color:#1c2b34;left:332.2px;">web-store</span>
<span class="t" style="top:1658.0px;font-size:19px;line-height:25px;color:#5b6770;right:3178.6px;">-</span>
<div class="b" style="left:285.6px;top:1699.8px;width:22.0px;height:22.0px;background:#fff;border:2px solid #b8bdd0;border-radius:4px;"></div>
<div class="b" style="left:317.3px;top:1697.8px;width:8.0px;height:26.0px;background:#55b89a;border-radius:4px;"></div>
<span class="t" style="letter-spacing:0.42px;top:1697.3px;font-size:21.5px;line-height:28px;color:#1c2b34;left:332.2px;">product-recommendation</span>
<span class="t" style="top:1699.3px;font-size:19px;line-height:25px;color:#5b6770;right:3178.6px;">-</span>
<div class="b" style="left:285.6px;top:1741.1px;width:22.0px;height:22.0px;background:#fff;border:2px solid #b8bdd0;border-radius:4px;"></div>
<div class="b" style="left:317.3px;top:1739.1px;width:8.0px;height:26.0px;background:#3a6fc4;border-radius:4px;"></div>
<span class="t" style="letter-spacing:-0.06px;top:1738.6px;font-size:21.5px;line-height:28px;color:#1c2b34;left:332.2px;">ad-server</span>
<span class="t" style="top:1740.6px;font-size:19px;line-height:25px;color:#5b6770;right:3178.6px;">-</span>
<div class="b" style="left:285.6px;top:1782.4px;width:22.0px;height:22.0px;background:#fff;border:2px solid #b8bdd0;border-radius:4px;"></div>
<div class="b" style="left:317.3px;top:1780.4px;width:8.0px;height:26.0px;background:#8e2fa8;border-radius:4px;"></div>
<span class="t" style="letter-spacing:0.10px;top:1779.9px;font-size:21.5px;line-height:28px;color:#1c2b34;left:332.2px;">gateway</span>
<span class="t" style="top:1781.9px;font-size:19px;line-height:25px;color:#5b6770;right:3178.6px;">-</span>
<div class="b" style="left:285.6px;top:1823.7px;width:22.0px;height:22.0px;background:#006bc2;border-radius:3px;"></div>
<svg class="b" style="left:285.6px;top:1823.7px;" width="22" height="22" viewBox="0 0 24 24"><path d="M5.500 12.500 10 17 18.500 7.500" fill="none" stroke="#fff" stroke-width="3" stroke-linecap="round" stroke-linejoin="round" /></svg>
<div class="b" style="left:317.3px;top:1821.7px;width:8.0px;height:26.0px;background:#a58fd0;border-radius:4px;"></div>
<span class="t" style="letter-spacing:-0.03px;top:1821.2px;font-size:21.5px;line-height:28px;color:#1c2b34;left:332.2px;">serviceextensions</span>
<span class="t" style="top:1823.2px;font-size:19px;line-height:25px;color:#5b6770;right:3178.6px;">11</span>
<div class="b" style="left:285.6px;top:1865.0px;width:22.0px;height:22.0px;background:#fff;border:2px solid #b8bdd0;border-radius:4px;"></div>
<div class="b" style="left:317.3px;top:1863.0px;width:8.0px;height:26.0px;background:#a58fd0;border-radius:4px;"></div>
<span class="t" style="letter-spacing:-0.05px;top:1862.5px;font-size:21.5px;line-height:28px;color:#1c2b34;left:332.2px;">aws.waf</span>
<span class="t" style="top:1864.5px;font-size:19px;line-height:25px;color:#5b6770;right:3178.6px;">-</span>
<div class="b" style="left:285.6px;top:1906.3px;width:22.0px;height:22.0px;background:#fff;border:2px solid #b8bdd0;border-radius:4px;"></div>
<div class="b" style="left:317.3px;top:1904.3px;width:8.0px;height:26.0px;background:#c95bc4;border-radius:4px;"></div>
<span class="t" style="letter-spacing:0.36px;top:1903.8px;font-size:21.5px;line-height:28px;color:#1c2b34;left:332.2px;">auth</span>
<span class="t" style="top:1905.8px;font-size:19px;line-height:25px;color:#5b6770;right:3178.6px;">-</span>
<svg class="b" style="left:686.0px;top:728.5px;" width="23" height="23" viewBox="0 0 24 24"><rect x="1.500" y="1.500" width="21" height="21" rx="2" fill="none" stroke="#006bc2" stroke-width="1.8" stroke-linecap="round" stroke-linejoin="round" /><rect x="1.500" y="1.500" width="6.500" height="21" fill="#8fc0e6"/><path d="M16.500 7.500 12 12l4.500 4.500" fill="none" stroke="#006bc2" stroke-width="2" stroke-linecap="round" stroke-linejoin="round" /></svg>
<span class="t" style="letter-spacing:-0.03px;top:726.1px;font-size:21.5px;line-height:28px;color:#006bc2;left:719.0px;">Hide Controls</span>
<div class="b" style="left:882.6px;top:727.0px;width:1.8px;height:25.5px;background:#d7dbe3;"></div>
<span class="t" style="letter-spacing:-0.39px;top:726.5px;font-size:21.5px;line-height:28px;color:#1c2b34;font-weight:700;left:897.2px;">11 signals found</span>
<span class="t" style="letter-spacing:-0.50px;top:789.0px;font-size:21.5px;line-height:28px;color:#1c2b34;left:692.2px;">All</span>
<div class="b" style="left:728.4px;top:788.0px;width:40.0px;height:30.0px;background:#dfe3ec;border-radius:15px;"></div>
<span class="t" style="top:792.9px;font-size:16.5px;line-height:21px;color:#4a5660;font-weight:700;left:748.4px;transform:translateX(-50%);">11</span>
<span class="t" style="letter-spacing:-0.50px;top:789.0px;font-size:21.5px;line-height:28px;color:#5b6770;left:820.4px;">Open</span>
<div class="b" style="left:885.0px;top:788.0px;width:40.2px;height:30.0px;background:#dfe3ec;border-radius:15px;"></div>
<span class="t" style="top:792.9px;font-size:16.5px;line-height:21px;color:#4a5660;font-weight:700;left:905.1px;transform:translateX(-50%);">11</span>
<span class="t" style="letter-spacing:-0.16px;top:789.0px;font-size:21.5px;line-height:28px;color:#a9b0b8;left:977.0px;">Archived</span>
<div class="b" style="left:1075.0px;top:788.0px;width:28.0px;height:30.0px;background:#f8f9fb;border-radius:15px;"></div>
<span class="t" style="top:793.4px;font-size:16px;line-height:21px;color:#a9b0b8;font-weight:700;left:1089.0px;transform:translateX(-50%);">0</span>
<span class="t" style="letter-spacing:-0.24px;top:789.0px;font-size:21.5px;line-height:28px;color:#a9b0b8;left:1154.2px;">Under Review</span>
<div class="b" style="left:1300.5px;top:788.0px;width:28.0px;height:30.0px;background:#f8f9fb;border-radius:15px;"></div>
<span class="t" style="top:793.4px;font-size:16px;line-height:21px;color:#a9b0b8;font-weight:700;left:1314.5px;transform:translateX(-50%);">0</span>
<div class="b" style="left:690.7px;top:826.0px;width:79.8px;height:5.5px;background:#006bc2;"></div>
<div class="b" style="left:667.6px;top:832.0px;width:1010.0px;height:1110.0px;background:#fff;border:1.5px solid #e4e7eb;border-radius:6px 0 0 0;"></div>
<div class="b" style="left:681.8px;top:843.0px;width:22.0px;height:22.0px;background:#fff;border:2px solid #b8bdd0;border-radius:4px;"></div>
<span class="t" style="letter-spacing:-0.36px;top:842.9px;font-size:17.5px;line-height:23px;color:#1c2b34;font-weight:700;left:727.3px;">SEVERITY</span>
<span class="t" style="letter-spacing:-0.04px;top:842.9px;font-size:17.5px;line-height:23px;color:#1c2b34;font-weight:700;left:878.6px;">TITLE</span>
<span class="t" style="letter-spacing:0.09px;top:842.9px;font-size:17.5px;line-height:23px;color:#1c2b34;font-weight:700;left:1541.7px;">SERVICE/ENV</span>
<div class="b" style="left:667.6px;top:875.1px;width:994.4px;height:1.8px;background:#e0e3e8;"></div>
<div class="b" style="left:681.8px;top:891.0px;width:22.0px;height:22.0px;background:#fff;border:2px solid #b8bdd0;border-radius:4px;"></div>
<div class="b" style="left:726.5px;top:889.5px;width:110.7px;height:31.0px;background:#e2a83a;border-radius:5px;"></div>
<span class="t" style="letter-spacing:-0.22px;top:894.9px;font-size:17px;line-height:22px;color:#fff;font-weight:700;left:781.8px;transform:translateX(-50%);">LOW</span>
<span class="t" style="letter-spacing:-0.28px;top:890.0px;font-size:21.5px;line-height:28px;color:#1c2b34;font-weight:700;left:878.6px;">Unsuccessful credential stuffing attack</span>
<div class="b" style="left:878.6px;top:931.5px;width:273.0px;height:31.7px;background:#f1f3f6;border-radius:5px;"></div>
<span class="t" style="letter-spacing:0.31px;top:933.8px;font-size:21px;line-height:27px;color:#1c2b34;left:885.1px;"><span style="color:#52606d;">category:</span><span style="color:#14397d;">account_takeover</span></span>
<div class="b" style="left:1541.7px;top:889.6px;width:230.0px;height:31.0px;background:#fff;border:1.5px solid #e6e9ed;border-radius:5px;"></div>
<div class="b" style="left:1541.7px;top:889.6px;width:31.5px;height:31.0px;background:#9683c8;border-radius:5px 0 0 5px;"></div>
<svg class="b" style="left:1546.2px;top:893.8px;" width="22.5" height="22.5" viewBox="0 0 24 24"><circle cx="12" cy="12" r="9.500" fill="none" stroke="#fff" stroke-width="1.9" stroke-linecap="round" stroke-linejoin="round" /><ellipse cx="12" cy="12" rx="4.300" ry="9.500" fill="none" stroke="#fff" stroke-width="1.9" stroke-linecap="round" stroke-linejoin="round" /><path d="M2.500 12h19" fill="none" stroke="#fff" stroke-width="1.9" stroke-linecap="round" stroke-linejoin="round" /></svg>
<span class="t" style="letter-spacing:-0.60px;top:892.5px;font-size:21px;line-height:27px;color:#1c2b34;left:1579.3px;">serviceextensions</span>
<div class="b" style="left:1541.7px;top:928.0px;width:92.5px;height:30.5px;background:#f1f3f6;border-radius:5px;"></div>
<span class="t" style="letter-spacing:-0.04px;top:929.7px;font-size:20.5px;line-height:27px;color:#1c2b34;left:1548.2px;"><span style="color:#52606d;">env:</span><span style="color:#14397d;">prod</span></span>
<div class="b" style="left:667.6px;top:985.9px;width:994.4px;height:1.6px;background:#e3e6ea;"></div>
<div class="b" style="left:681.8px;top:1001.6px;width:22.0px;height:22.0px;background:#fff;border:2px solid #b8bdd0;border-radius:4px;"></div>
<div class="b" style="left:726.5px;top:1000.1px;width:110.7px;height:31.0px;background:#e2a83a;border-radius:5px;"></div>
<span class="t" style="letter-spacing:-0.22px;top:1005.6px;font-size:17px;line-height:22px;color:#fff;font-weight:700;left:781.8px;transform:translateX(-50%);">LOW</span>
<span class="t" style="letter-spacing:-0.28px;top:1000.7px;font-size:21.5px;line-height:28px;color:#1c2b34;font-weight:700;left:878.6px;">Unsuccessful credential stuffing attack</span>
<div class="b" style="left:878.6px;top:1042.2px;width:273.0px;height:31.7px;background:#f1f3f6;border-radius:5px;"></div>
<span class="t" style="letter-spacing:0.31px;top:1044.4px;font-size:21px;line-height:27px;color:#1c2b34;left:885.1px;"><span style="color:#52606d;">category:</span><span style="color:#14397d;">account_takeover</span></span>
<div class="b" style="left:1541.7px;top:1000.2px;width:230.0px;height:31.0px;background:#fff;border:1.5px solid #e6e9ed;border-radius:5px;"></div>
<div class="b" style="left:1541.7px;top:1000.2px;width:31.5px;height:31.0px;background:#9683c8;border-radius:5px 0 0 5px;"></div>
<svg class="b" style="left:1546.2px;top:1004.4px;" width="22.5" height="22.5" viewBox="0 0 24 24"><circle cx="12" cy="12" r="9.500" fill="none" stroke="#fff" stroke-width="1.9" stroke-linecap="round" stroke-linejoin="round" /><ellipse cx="12" cy="12" rx="4.300" ry="9.500" fill="none" stroke="#fff" stroke-width="1.9" stroke-linecap="round" stroke-linejoin="round" /><path d="M2.500 12h19" fill="none" stroke="#fff" stroke-width="1.9" stroke-linecap="round" stroke-linejoin="round" /></svg>
<span class="t" style="letter-spacing:-0.60px;top:1003.2px;font-size:21px;line-height:27px;color:#1c2b34;left:1579.3px;">serviceextensions</span>
<div class="b" style="left:1541.7px;top:1038.7px;width:92.5px;height:30.5px;background:#f1f3f6;border-radius:5px;"></div>
<span class="t" style="letter-spacing:-0.04px;top:1040.3px;font-size:20.5px;line-height:27px;color:#1c2b34;left:1548.2px;"><span style="color:#52606d;">env:</span><span style="color:#14397d;">prod</span></span>
<div class="b" style="left:667.6px;top:1096.5px;width:994.4px;height:1.6px;background:#e3e6ea;"></div>
<div class="b" style="left:681.8px;top:1112.3px;width:22.0px;height:22.0px;background:#fff;border:2px solid #b8bdd0;border-radius:4px;"></div>
<div class="b" style="left:726.5px;top:1110.8px;width:110.7px;height:31.0px;background:#e2a83a;border-radius:5px;"></div>
<span class="t" style="letter-spacing:-0.22px;top:1116.2px;font-size:17px;line-height:22px;color:#fff;font-weight:700;left:781.8px;transform:translateX(-50%);">LOW</span>
<span class="t" style="letter-spacing:-0.28px;top:1111.3px;font-size:21.5px;line-height:28px;color:#1c2b34;font-weight:700;left:878.6px;">Unsuccessful credential stuffing attack</span>
<div class="b" style="left:878.6px;top:1152.8px;width:273.0px;height:31.7px;background:#f1f3f6;border-radius:5px;"></div>
<span class="t" style="letter-spacing:0.31px;top:1155.1px;font-size:21px;line-height:27px;color:#1c2b34;left:885.1px;"><span style="color:#52606d;">category:</span><span style="color:#14397d;">account_takeover</span></span>
<div class="b" style="left:1541.7px;top:1110.9px;width:230.0px;height:31.0px;background:#fff;border:1.5px solid #e6e9ed;border-radius:5px;"></div>
<div class="b" style="left:1541.7px;top:1110.9px;width:31.5px;height:31.0px;background:#9683c8;border-radius:5px 0 0 5px;"></div>
<svg class="b" style="left:1546.2px;top:1115.1px;" width="22.5" height="22.5" viewBox="0 0 24 24"><circle cx="12" cy="12" r="9.500" fill="none" stroke="#fff" stroke-width="1.9" stroke-linecap="round" stroke-linejoin="round" /><ellipse cx="12" cy="12" rx="4.300" ry="9.500" fill="none" stroke="#fff" stroke-width="1.9" stroke-linecap="round" stroke-linejoin="round" /><path d="M2.500 12h19" fill="none" stroke="#fff" stroke-width="1.9" stroke-linecap="round" stroke-linejoin="round" /></svg>
<span class="t" style="letter-spacing:-0.60px;top:1113.8px;font-size:21px;line-height:27px;color:#1c2b34;left:1579.3px;">serviceextensions</span>
<div class="b" style="left:1541.7px;top:1149.3px;width:92.5px;height:30.5px;background:#f1f3f6;border-radius:5px;"></div>
<span class="t" style="letter-spacing:-0.04px;top:1151.0px;font-size:20.5px;line-height:27px;color:#1c2b34;left:1548.2px;"><span style="color:#52606d;">env:</span><span style="color:#14397d;">prod</span></span>
<div class="b" style="left:667.6px;top:1207.2px;width:994.4px;height:1.6px;background:#e3e6ea;"></div>
<div class="b" style="left:681.8px;top:1223.0px;width:22.0px;height:22.0px;background:#fff;border:2px solid #b8bdd0;border-radius:4px;"></div>
<div class="b" style="left:726.5px;top:1221.5px;width:110.7px;height:31.0px;background:#e2a83a;border-radius:5px;"></div>
<span class="t" style="letter-spacing:-0.22px;top:1226.9px;font-size:17px;line-height:22px;color:#fff;font-weight:700;left:781.8px;transform:translateX(-50%);">LOW</span>
<span class="t" style="letter-spacing:-0.28px;top:1222.0px;font-size:21.5px;line-height:28px;color:#1c2b34;font-weight:700;left:878.6px;">Unsuccessful credential stuffing attack</span>
<div class="b" style="left:878.6px;top:1263.5px;width:273.0px;height:31.7px;background:#f1f3f6;border-radius:5px;"></div>
<span class="t" style="letter-spacing:0.31px;top:1265.7px;font-size:21px;line-height:27px;color:#1c2b34;left:885.1px;"><span style="color:#52606d;">category:</span><span style="color:#14397d;">account_takeover</span></span>
<div class="b" style="left:1541.7px;top:1221.5px;width:230.0px;height:31.0px;background:#fff;border:1.5px solid #e6e9ed;border-radius:5px;"></div>
<div class="b" style="left:1541.7px;top:1221.5px;width:31.5px;height:31.0px;background:#9683c8;border-radius:5px 0 0 5px;"></div>
<svg class="b" style="left:1546.2px;top:1225.8px;" width="22.5" height="22.5" viewBox="0 0 24 24"><circle cx="12" cy="12" r="9.500" fill="none" stroke="#fff" stroke-width="1.9" stroke-linecap="round" stroke-linejoin="round" /><ellipse cx="12" cy="12" rx="4.300" ry="9.500" fill="none" stroke="#fff" stroke-width="1.9" stroke-linecap="round" stroke-linejoin="round" /><path d="M2.500 12h19" fill="none" stroke="#fff" stroke-width="1.9" stroke-linecap="round" stroke-linejoin="round" /></svg>
<span class="t" style="letter-spacing:-0.60px;top:1224.5px;font-size:21px;line-height:27px;color:#1c2b34;left:1579.3px;">serviceextensions</span>
<div class="b" style="left:1541.7px;top:1260.0px;width:92.5px;height:30.5px;background:#f1f3f6;border-radius:5px;"></div>
<span class="t" style="letter-spacing:-0.04px;top:1261.6px;font-size:20.5px;line-height:27px;color:#1c2b34;left:1548.2px;"><span style="color:#52606d;">env:</span><span style="color:#14397d;">prod</span></span>
<div class="b" style="left:667.6px;top:1317.8px;width:994.4px;height:1.6px;background:#e3e6ea;"></div>
<div class="b" style="left:681.8px;top:1333.6px;width:22.0px;height:22.0px;background:#fff;border:2px solid #b8bdd0;border-radius:4px;"></div>
<div class="b" style="left:726.5px;top:1332.1px;width:110.7px;height:31.0px;background:#aa1420;border-radius:5px;"></div>
<span class="t" style="letter-spacing:-0.29px;top:1337.5px;font-size:17px;line-height:22px;color:#fff;font-weight:700;left:781.8px;transform:translateX(-50%);">CRITICAL</span>
<span class="t" style="letter-spacing:-0.27px;top:1332.6px;font-size:21.5px;line-height:28px;color:#1c2b34;font-weight:700;left:878.6px;">Account compromised by credential stuffing attack</span>
<div class="b" style="left:878.6px;top:1374.1px;width:273.0px;height:31.7px;background:#f1f3f6;border-radius:5px;"></div>
<span class="t" style="letter-spacing:0.31px;top:1376.4px;font-size:21px;line-height:27px;color:#1c2b34;left:885.1px;"><span style="color:#52606d;">category:</span><span style="color:#14397d;">account_takeover</span></span>
<div class="b" style="left:1541.7px;top:1332.2px;width:230.0px;height:31.0px;background:#fff;border:1.5px solid #e6e9ed;border-radius:5px;"></div>
<div class="b" style="left:1541.7px;top:1332.2px;width:31.5px;height:31.0px;background:#9683c8;border-radius:5px 0 0 5px;"></div>
<svg class="b" style="left:1546.2px;top:1336.4px;" width="22.5" height="22.5" viewBox="0 0 24 24"><circle cx="12" cy="12" r="9.500" fill="none" stroke="#fff" stroke-width="1.9" stroke-linecap="round" stroke-linejoin="round" /><ellipse cx="12" cy="12" rx="4.300" ry="9.500" fill="none" stroke="#fff" stroke-width="1.9" stroke-linecap="round" stroke-linejoin="round" /><path d="M2.500 12h19" fill="none" stroke="#fff" stroke-width="1.9" stroke-linecap="round" stroke-linejoin="round" /></svg>
<span class="t" style="letter-spacing:-0.60px;top:1335.1px;font-size:21px;line-height:27px;color:#1c2b34;left:1579.3px;">serviceextensions</span>
<div class="b" style="left:1541.7px;top:1370.6px;width:92.5px;height:30.5px;background:#f1f3f6;border-radius:5px;"></div>
<span class="t" style="letter-spacing:-0.04px;top:1372.3px;font-size:20.5px;line-height:27px;color:#1c2b34;left:1548.2px;"><span style="color:#52606d;">env:</span><span style="color:#14397d;">prod</span></span>
<div class="b" style="left:667.6px;top:1428.5px;width:994.4px;height:1.6px;background:#e3e6ea;"></div>
<div class="b" style="left:681.8px;top:1444.2px;width:22.0px;height:22.0px;background:#fff;border:2px solid #b8bdd0;border-radius:4px;"></div>
<div class="b" style="left:726.5px;top:1442.8px;width:110.7px;height:31.0px;background:#e2a83a;border-radius:5px;"></div>
<span class="t" style="letter-spacing:-0.22px;top:1448.2px;font-size:17px;line-height:22px;color:#fff;font-weight:700;left:781.8px;transform:translateX(-50%);">LOW</span>
<span class="t" style="letter-spacing:-0.28px;top:1443.3px;font-size:21.5px;line-height:28px;color:#1c2b34;font-weight:700;left:878.6px;">Unsuccessful credential stuffing attack</span>
<div class="b" style="left:878.6px;top:1484.8px;width:273.0px;height:31.7px;background:#f1f3f6;border-radius:5px;"></div>
<span class="t" style="letter-spacing:0.31px;top:1487.0px;font-size:21px;line-height:27px;color:#1c2b34;left:885.1px;"><span style="color:#52606d;">category:</span><span style="color:#14397d;">account_takeover</span></span>
<div class="b" style="left:1541.7px;top:1442.8px;width:230.0px;height:31.0px;background:#fff;border:1.5px solid #e6e9ed;border-radius:5px;"></div>
<div class="b" style="left:1541.7px;top:1442.8px;width:31.5px;height:31.0px;background:#9683c8;border-radius:5px 0 0 5px;"></div>
<svg class="b" style="left:1546.2px;top:1447.0px;" width="22.5" height="22.5" viewBox="0 0 24 24"><circle cx="12" cy="12" r="9.500" fill="none" stroke="#fff" stroke-width="1.9" stroke-linecap="round" stroke-linejoin="round" /><ellipse cx="12" cy="12" rx="4.300" ry="9.500" fill="none" stroke="#fff" stroke-width="1.9" stroke-linecap="round" stroke-linejoin="round" /><path d="M2.500 12h19" fill="none" stroke="#fff" stroke-width="1.9" stroke-linecap="round" stroke-linejoin="round" /></svg>
<span class="t" style="letter-spacing:-0.60px;top:1445.8px;font-size:21px;line-height:27px;color:#1c2b34;left:1579.3px;">serviceextensions</span>
<div class="b" style="left:1541.7px;top:1481.2px;width:92.5px;height:30.5px;background:#f1f3f6;border-radius:5px;"></div>
<span class="t" style="letter-spacing:-0.04px;top:1482.9px;font-size:20.5px;line-height:27px;color:#1c2b34;left:1548.2px;"><span style="color:#52606d;">env:</span><span style="color:#14397d;">prod</span></span>
<div class="b" style="left:667.6px;top:1539.1px;width:994.4px;height:1.6px;background:#e3e6ea;"></div>
<div class="b" style="left:681.8px;top:1554.9px;width:22.0px;height:22.0px;background:#fff;border:2px solid #b8bdd0;border-radius:4px;"></div>
<div class="b" style="left:726.5px;top:1553.4px;width:110.7px;height:31.0px;background:#e2a83a;border-radius:5px;"></div>
<span class="t" style="letter-spacing:-0.22px;top:1558.8px;font-size:17px;line-height:22px;color:#fff;font-weight:700;left:781.8px;transform:translateX(-50%);">LOW</span>
<span class="t" style="letter-spacing:-0.28px;top:1553.9px;font-size:21.5px;line-height:28px;color:#1c2b34;font-weight:700;left:878.6px;">Unsuccessful credential stuffing attack</span>
<div class="b" style="left:878.6px;top:1595.4px;width:273.0px;height:31.7px;background:#f1f3f6;border-radius:5px;"></div>
<span class="t" style="letter-spacing:0.31px;top:1597.7px;font-size:21px;line-height:27px;color:#1c2b34;left:885.1px;"><span style="color:#52606d;">category:</span><span style="color:#14397d;">account_takeover</span></span>
<div class="b" style="left:1541.7px;top:1553.5px;width:230.0px;height:31.0px;background:#fff;border:1.5px solid #e6e9ed;border-radius:5px;"></div>
<div class="b" style="left:1541.7px;top:1553.5px;width:31.5px;height:31.0px;background:#9683c8;border-radius:5px 0 0 5px;"></div>
<svg class="b" style="left:1546.2px;top:1557.7px;" width="22.5" height="22.5" viewBox="0 0 24 24"><circle cx="12" cy="12" r="9.500" fill="none" stroke="#fff" stroke-width="1.9" stroke-linecap="round" stroke-linejoin="round" /><ellipse cx="12" cy="12" rx="4.300" ry="9.500" fill="none" stroke="#fff" stroke-width="1.9" stroke-linecap="round" stroke-linejoin="round" /><path d="M2.500 12h19" fill="none" stroke="#fff" stroke-width="1.9" stroke-linecap="round" stroke-linejoin="round" /></svg>
<span class="t" style="letter-spacing:-0.60px;top:1556.4px;font-size:21px;line-height:27px;color:#1c2b34;left:1579.3px;">serviceextensions</span>
<div class="b" style="left:1541.7px;top:1591.9px;width:92.5px;height:30.5px;background:#f1f3f6;border-radius:5px;"></div>
<span class="t" style="letter-spacing:-0.04px;top:1593.6px;font-size:20.5px;line-height:27px;color:#1c2b34;left:1548.2px;"><span style="color:#52606d;">env:</span><span style="color:#14397d;">prod</span></span>
<div class="b" style="left:667.6px;top:1649.8px;width:994.4px;height:1.6px;background:#e3e6ea;"></div>
<div class="b" style="left:681.8px;top:1665.6px;width:22.0px;height:22.0px;background:#fff;border:2px solid #b8bdd0;border-radius:4px;"></div>
<div class="b" style="left:726.5px;top:1664.1px;width:110.7px;height:31.0px;background:#e2a83a;border-radius:5px;"></div>
<span class="t" style="letter-spacing:-0.22px;top:1669.5px;font-size:17px;line-height:22px;color:#fff;font-weight:700;left:781.8px;transform:translateX(-50%);">LOW</span>
<span class="t" style="letter-spacing:-0.28px;top:1664.6px;font-size:21.5px;line-height:28px;color:#1c2b34;font-weight:700;left:878.6px;">Unsuccessful credential stuffing attack</span>
<div class="b" style="left:878.6px;top:1706.1px;width:273.0px;height:31.7px;background:#f1f3f6;border-radius:5px;"></div>
<span class="t" style="letter-spacing:0.31px;top:1708.3px;font-size:21px;line-height:27px;color:#1c2b34;left:885.1px;"><span style="color:#52606d;">category:</span><span style="color:#14397d;">account_takeover</span></span>
<div class="b" style="left:1541.7px;top:1664.2px;width:230.0px;height:31.0px;background:#fff;border:1.5px solid #e6e9ed;border-radius:5px;"></div>
<div class="b" style="left:1541.7px;top:1664.2px;width:31.5px;height:31.0px;background:#9683c8;border-radius:5px 0 0 5px;"></div>
<svg class="b" style="left:1546.2px;top:1668.4px;" width="22.5" height="22.5" viewBox="0 0 24 24"><circle cx="12" cy="12" r="9.500" fill="none" stroke="#fff" stroke-width="1.9" stroke-linecap="round" stroke-linejoin="round" /><ellipse cx="12" cy="12" rx="4.300" ry="9.500" fill="none" stroke="#fff" stroke-width="1.9" stroke-linecap="round" stroke-linejoin="round" /><path d="M2.500 12h19" fill="none" stroke="#fff" stroke-width="1.9" stroke-linecap="round" stroke-linejoin="round" /></svg>
<span class="t" style="letter-spacing:-0.60px;top:1667.1px;font-size:21px;line-height:27px;color:#1c2b34;left:1579.3px;">serviceextensions</span>
<div class="b" style="left:1541.7px;top:1702.6px;width:92.5px;height:30.5px;background:#f1f3f6;border-radius:5px;"></div>
<span class="t" style="letter-spacing:-0.04px;top:1704.2px;font-size:20.5px;line-height:27px;color:#1c2b34;left:1548.2px;"><span style="color:#52606d;">env:</span><span style="color:#14397d;">prod</span></span>
<div class="b" style="left:667.6px;top:1760.4px;width:994.4px;height:1.6px;background:#e3e6ea;"></div>
<div class="b" style="left:681.8px;top:1776.2px;width:22.0px;height:22.0px;background:#fff;border:2px solid #b8bdd0;border-radius:4px;"></div>
<div class="b" style="left:726.5px;top:1774.7px;width:110.7px;height:31.0px;background:#e2a83a;border-radius:5px;"></div>
<span class="t" style="letter-spacing:-0.22px;top:1780.1px;font-size:17px;line-height:22px;color:#fff;font-weight:700;left:781.8px;transform:translateX(-50%);">LOW</span>
<span class="t" style="letter-spacing:-0.28px;top:1775.2px;font-size:21.5px;line-height:28px;color:#1c2b34;font-weight:700;left:878.6px;">Unsuccessful credential stuffing attack</span>
<div class="b" style="left:878.6px;top:1816.7px;width:273.0px;height:31.7px;background:#f1f3f6;border-radius:5px;"></div>
<span class="t" style="letter-spacing:0.31px;top:1819.0px;font-size:21px;line-height:27px;color:#1c2b34;left:885.1px;"><span style="color:#52606d;">category:</span><span style="color:#14397d;">account_takeover</span></span>
<div class="b" style="left:1541.7px;top:1774.8px;width:230.0px;height:31.0px;background:#fff;border:1.5px solid #e6e9ed;border-radius:5px;"></div>
<div class="b" style="left:1541.7px;top:1774.8px;width:31.5px;height:31.0px;background:#9683c8;border-radius:5px 0 0 5px;"></div>
<svg class="b" style="left:1546.2px;top:1779.0px;" width="22.5" height="22.5" viewBox="0 0 24 24"><circle cx="12" cy="12" r="9.500" fill="none" stroke="#fff" stroke-width="1.9" stroke-linecap="round" stroke-linejoin="round" /><ellipse cx="12" cy="12" rx="4.300" ry="9.500" fill="none" stroke="#fff" stroke-width="1.9" stroke-linecap="round" stroke-linejoin="round" /><path d="M2.500 12h19" fill="none" stroke="#fff" stroke-width="1.9" stroke-linecap="round" stroke-linejoin="round" /></svg>
<span class="t" style="letter-spacing:-0.60px;top:1777.7px;font-size:21px;line-height:27px;color:#1c2b34;left:1579.3px;">serviceextensions</span>
<div class="b" style="left:1541.7px;top:1813.2px;width:92.5px;height:30.5px;background:#f1f3f6;border-radius:5px;"></div>
<span class="t" style="letter-spacing:-0.04px;top:1814.9px;font-size:20.5px;line-height:27px;color:#1c2b34;left:1548.2px;"><span style="color:#52606d;">env:</span><span style="color:#14397d;">prod</span></span>
<div class="b" style="left:667.6px;top:1871.1px;width:994.4px;height:1.6px;background:#e3e6ea;"></div>
<div class="b" style="left:681.8px;top:1886.8px;width:22.0px;height:22.0px;background:#fff;border:2px solid #b8bdd0;border-radius:4px;"></div>
<div class="b" style="left:726.5px;top:1885.3px;width:110.7px;height:31.0px;background:#e2a83a;border-radius:5px;"></div>
<span class="t" style="letter-spacing:-0.22px;top:1890.8px;font-size:17px;line-height:22px;color:#fff;font-weight:700;left:781.8px;transform:translateX(-50%);">LOW</span>
<span class="t" style="letter-spacing:-0.28px;top:1885.9px;font-size:21.5px;line-height:28px;color:#1c2b34;font-weight:700;left:878.6px;">Unsuccessful credential stuffing attack</span>
<div class="b" style="left:878.6px;top:1927.3px;width:273.0px;height:31.7px;background:#f1f3f6;border-radius:5px;"></div>
<span class="t" style="letter-spacing:0.31px;top:1929.6px;font-size:21px;line-height:27px;color:#1c2b34;left:885.1px;"><span style="color:#52606d;">category:</span><span style="color:#14397d;">account_takeover</span></span>
<div class="b" style="left:1541.7px;top:1885.4px;width:230.0px;height:31.0px;background:#fff;border:1.5px solid #e6e9ed;border-radius:5px;"></div>
<div class="b" style="left:1541.7px;top:1885.4px;width:31.5px;height:31.0px;background:#9683c8;border-radius:5px 0 0 5px;"></div>
<svg class="b" style="left:1546.2px;top:1889.6px;" width="22.5" height="22.5" viewBox="0 0 24 24"><circle cx="12" cy="12" r="9.500" fill="none" stroke="#fff" stroke-width="1.9" stroke-linecap="round" stroke-linejoin="round" /><ellipse cx="12" cy="12" rx="4.300" ry="9.500" fill="none" stroke="#fff" stroke-width="1.9" stroke-linecap="round" stroke-linejoin="round" /><path d="M2.500 12h19" fill="none" stroke="#fff" stroke-width="1.9" stroke-linecap="round" stroke-linejoin="round" /></svg>
<span class="t" style="letter-spacing:-0.60px;top:1888.4px;font-size:21px;line-height:27px;color:#1c2b34;left:1579.3px;">serviceextensions</span>
<div class="b" style="left:1541.7px;top:1923.8px;width:92.5px;height:30.5px;background:#f1f3f6;border-radius:5px;"></div>
<span class="t" style="letter-spacing:-0.04px;top:1925.5px;font-size:20.5px;line-height:27px;color:#1c2b34;left:1548.2px;"><span style="color:#52606d;">env:</span><span style="color:#14397d;">prod</span></span>
<div class="b" style="left:667.6px;top:1981.7px;width:994.4px;height:1.6px;background:#e3e6ea;"></div>
<div class="b" style="left:1662px;top:245px;width:1970px;height:1700px;background:#fff;box-shadow:-8px 0 48px rgba(30,40,60,.2),-2px 0 8px rgba(30,40,60,.08);clip-path:inset(0 0 0 -120px);"></div>
<div class="b" style="left:1662.0px;top:245.0px;width:1970.0px;height:6.0px;background:#aa1420;"></div>
<svg class="b" style="left:1687.5px;top:277.3px;" width="21" height="22" viewBox="0 0 24 24"><path d="M12 2 20 5.300v6.700c0 4.700-3.400 7.800-8 9.800-4.600-2-8-5.100-8-9.800V5.300z" fill="none" stroke="#5b6770" stroke-width="1.9" stroke-linecap="round" stroke-linejoin="round" /><path d="M12 7v6" fill="none" stroke="#5b6770" stroke-width="2.3" stroke-linecap="round" stroke-linejoin="round" /><circle cx="12" cy="16.800" r="1.400" fill="#5b6770"/></svg>
<span class="t" style="letter-spacing:0.06px;top:276.3px;font-size:19.5px;line-height:25px;color:#1c2b34;left:1722.6px;">Threat</span>
<div class="b" style="left:1805.6px;top:274.0px;width:1.8px;height:26.5px;background:#d7dbe3;"></div>
<span class="t" style="letter-spacing:-0.09px;top:276.3px;font-size:19.5px;line-height:25px;color:#1c2b34;left:1833.3px;">Sun, Nov 2, 2025, 10:05:29 pm</span>
<div class="b" style="left:2113.6px;top:274.3px;width:186.4px;height:26.4px;background:#dfe3ed;border-radius:5px;"></div>
<span class="t" style="letter-spacing:0.27px;top:276.3px;font-size:19.5px;line-height:25px;color:#5b6770;left:2120.5px;">about 17 hours ago</span>
<svg class="b" style="left:3325.0px;top:276.5px;" width="23" height="23" viewBox="0 0 24 24"><path d="M12 15V3.500M7.500 7.500 12 3l4.500 4.500" fill="none" stroke="#5b6770" stroke-width="1.7" stroke-linecap="round" stroke-linejoin="round" /><path d="M3.500 14.500V20.500h17v-6" fill="none" stroke="#5b6770" stroke-width="1.7" stroke-linecap="round" stroke-linejoin="round" /></svg>
<span class="t" style="letter-spacing:0.12px;top:274.2px;font-size:21.5px;line-height:28px;color:#006bc2;left:3368.8px;">Open full page</span>
<svg class="b" style="left:3520.0px;top:277.5px;" width="21" height="21" viewBox="0 0 24 24"><path d="M14.500 3H21v6.500M21 3l-6.500 6.500M9.500 21H3v-6.500M3 21l6.500-6.500M3 9.500V3h6.500M3 3l6.500 6.500M21 14.500V21h-6.500M21 21l-6.500-6.500" fill="none" stroke="#006bc2" stroke-width="1.9" stroke-linecap="round" stroke-linejoin="round" /></svg>
<div class="b" style="left:3555.7px;top:274.0px;width:1.8px;height:26.5px;background:#d7dbe3;"></div>
<svg class="b" style="left:3578.4px;top:276.7px;" width="22" height="22" viewBox="0 0 24 24"><path d="M5 5 19 19M19 5 5 19" fill="none" stroke="#5b6770" stroke-width="1.7" stroke-linecap="round" stroke-linejoin="round" /></svg>
<div class="b" style="left:1686.8px;top:322.7px;width:111.5px;height:31.2px;background:#aa1420;border-radius:6px;"></div>
<span class="t" style="letter-spacing:-0.29px;top:327.9px;font-size:17px;line-height:22px;color:#fff;font-weight:700;left:1742.5px;transform:translateX(-50%);">CRITICAL</span>
<span class="t" style="letter-spacing:-0.49px;top:320.8px;font-size:30px;line-height:39px;color:#1c2b34;font-weight:700;left:1811.0px;">Account compromised by credential stuffing attack</span>
<div class="b" style="left:1686.8px;top:371.6px;width:99.9px;height:31.7px;background:#f1f3f6;border-radius:5px;"></div>
<span class="t" style="letter-spacing:0.65px;top:373.9px;font-size:21px;line-height:27px;color:#1c2b34;left:1693.3px;"><span style="color:#52606d;">env:</span><span style="color:#14397d;">prod</span></span>
<div class="b" style="left:1794.2px;top:371.6px;width:389.8px;height:31.7px;background:#f1f3f6;border-radius:5px;"></div>
<span class="t" style="letter-spacing:0.43px;top:373.9px;font-size:21px;line-height:27px;color:#1c2b34;left:1800.7px;"><span style="color:#52606d;">technique:</span><span style="color:#14397d;">t1586-compromise-accounts</span></span>
<div class="b" style="left:2191.5px;top:371.6px;width:272.5px;height:31.7px;background:#f1f3f6;border-radius:5px;"></div>
<span class="t" style="letter-spacing:0.29px;top:373.9px;font-size:21px;line-height:27px;color:#1c2b34;left:2198.0px;"><span style="color:#52606d;">category:</span><span style="color:#14397d;">account_takeover</span></span>
<div class="b" style="left:2471.4px;top:371.6px;width:223.6px;height:31.7px;background:#f1f3f6;border-radius:5px;"></div>
<span class="t" style="letter-spacing:0.20px;top:373.9px;font-size:21px;line-height:27px;color:#1c2b34;left:2477.9px;"><span style="color:#52606d;">owasp-api:</span><span style="color:#14397d;">api02-2023</span></span>
<div class="b" style="left:2701.6px;top:371.6px;width:364.2px;height:31.7px;background:#f1f3f6;border-radius:5px;"></div>
<span class="t" style="letter-spacing:0.34px;top:373.9px;font-size:21px;line-height:27px;color:#1c2b34;left:2708.1px;"><span style="color:#52606d;">tactic:</span><span style="color:#14397d;">ta0042-resource_development</span></span>
<div class="b" style="left:3072.5px;top:371.6px;width:169.5px;height:31.7px;background:#f1f3f6;border-radius:5px;"></div>
<span class="t" style="letter-spacing:0.09px;top:373.9px;font-size:21px;line-height:27px;color:#1c2b34;left:3079.0px;"><span style="color:#52606d;">owasp:</span><span style="color:#14397d;">a07-2021</span></span>
<div class="b" style="left:3249.5px;top:371.6px;width:264.5px;height:31.7px;background:#f1f3f6;border-radius:5px;"></div>
<span class="t" style="letter-spacing:0.42px;top:373.9px;font-size:21px;line-height:27px;color:#1c2b34;left:3256.0px;"><span style="color:#52606d;">source:</span><span style="color:#14397d;">application-threats</span></span>
<div class="b" style="left:3521.6px;top:371.6px;width:28.0px;height:31.7px;background:#f1f3f6;border-radius:5px;"></div>
<span class="t" style="letter-spacing:-0.45px;top:374.2px;font-size:21px;line-height:27px;color:#52606d;left:3527.5px;">n..</span>
<div class="b" style="left:3556.6px;top:371.6px;width:51.4px;height:31.7px;background:#fff;border:1.5px solid #cfd4dd;border-radius:5px;"></div>
<span class="t" style="letter-spacing:0.79px;top:374.6px;font-size:21px;line-height:27px;color:#1c2b34;left:3582.3px;transform:translateX(-50%);">+56</span>
<div class="b" style="left:1662.0px;top:429.8px;width:1970.0px;height:1.5px;background:#e4e7eb;"></div>
<div class="b" style="left:1687.2px;top:456.2px;width:1271.6px;height:1048.4px;background:#fff;border:1.5px solid #e6e9ed;border-radius:12px;"></div>
<span class="t" style="letter-spacing:0.23px;top:493.1px;font-size:22px;line-height:29px;color:#1c2b34;font-weight:700;left:1714.0px;">WHAT HAPPENED</span>
<div class="b" style="left:2650.6px;top:487.9px;width:282.0px;height:37.2px;background:#fff;border:1.5px solid #e6e9ed;border-radius:19px;"></div>
<span class="t" style="letter-spacing:-0.16px;top:494.0px;font-size:20px;line-height:26px;color:#1c2b34;left:2664.0px;">Category: Account Take Over</span>
<span class="t" style="letter-spacing:0.23px;top:558.2px;font-size:21.3px;line-height:28px;color:#1c2b34;left:1714.0px;">Credential stuffing is an attack where an attacker attempts to log into many accounts using stolen or leaked credentials. Those</span>
<span class="t" style="letter-spacing:0.16px;top:588.8px;font-size:21.3px;line-height:28px;color:#1c2b34;left:1714.0px;">accounts may not exist in your system since they come from a third party. This attack works because users often reuse</span>
<span class="t" style="letter-spacing:0.22px;top:619.3px;font-size:21.3px;line-height:28px;color:#1c2b34;left:1714.0px;">passwords across websites. Attackers will generally attempt a single-digit login per account.</span>
<div class="b" style="left:1714.0px;top:673.2px;width:1219.4px;height:1.5px;background:#e4e7eb;"></div>
<span class="t" style="letter-spacing:0.41px;top:702.9px;font-size:17.5px;line-height:23px;color:#5b6770;font-weight:700;left:1714.0px;">SERVICE</span>
<div class="b" style="left:1896.7px;top:702.9px;width:203.1px;height:31.0px;background:#fff;border:1.5px solid #e6e9ed;border-radius:5px;"></div>
<div class="b" style="left:1896.7px;top:702.9px;width:31.3px;height:31.0px;background:#9683c8;border-radius:5px 0 0 5px;"></div>
<svg class="b" style="left:1901.2px;top:707.2px;" width="22.5" height="22.5" viewBox="0 0 24 24"><circle cx="12" cy="12" r="9.500" fill="none" stroke="#fff" stroke-width="1.9" stroke-linecap="round" stroke-linejoin="round" /><ellipse cx="12" cy="12" rx="4.300" ry="9.500" fill="none" stroke="#fff" stroke-width="1.9" stroke-linecap="round" stroke-linejoin="round" /><path d="M2.500 12h19" fill="none" stroke="#fff" stroke-width="1.9" stroke-linecap="round" stroke-linejoin="round" /></svg>
<span class="t" style="letter-spacing:-0.14px;top:706.0px;font-size:20px;line-height:26px;color:#1c2b34;left:1935.0px;">serviceextensions</span>
<div class="b" style="left:2125.9px;top:700.3px;width:241.1px;height:36.9px;background:#fef2da;border-radius:19px;"></div>
<svg class="b" style="left:2139.0px;top:708.0px;" width="22" height="22" viewBox="0 0 24 24"><path d="M20.500 3.500c-5-.5-9.500 2.500-12 8.500l3.500 3.500c6-2.500 9-7 8.500-12z" fill="none" stroke="#de5b1c" stroke-width="1.9" stroke-linecap="round" stroke-linejoin="round" /><path d="M8.500 12 4 12.500 7 9M12 15.500 11.500 20l3.500-3M4 20l3.500-3.500M5.500 21.500 3 21l-.5-2.500" fill="none" stroke="#de5b1c" stroke-width="1.8" stroke-linecap="round" stroke-linejoin="round" /><path d="M9 11 21 3.500" fill="none" stroke="#de5b1c" stroke-width="1.7" stroke-linecap="round" stroke-linejoin="round" /></svg>
<span class="t" style="letter-spacing:-0.52px;top:705.8px;font-size:21px;line-height:27px;color:#de5b1c;left:2166.3px;">Service In Production</span>
<div class="b" style="left:2383.0px;top:702.9px;width:98.8px;height:32.4px;background:#f1f3f6;border-radius:5px;"></div>
<span class="t" style="letter-spacing:0.51px;top:705.5px;font-size:21px;line-height:27px;color:#1c2b34;left:2389.5px;"><span style="color:#52606d;">env:</span><span style="color:#14397d;">prod</span></span>
<div class="b" style="left:1714.0px;top:762.5px;width:1219.4px;height:1.5px;background:#e4e7eb;"></div>
<span class="t" style="letter-spacing:0.45px;top:792.4px;font-size:17.5px;line-height:23px;color:#5b6770;font-weight:700;left:1714.0px;">CLUSTER</span>
<span class="t" style="letter-spacing:0.98px;top:821.1px;font-size:17.5px;line-height:23px;color:#5b6770;font-weight:700;left:1714.0px;">ATTRIBUTES</span>
<span class="t" style="letter-spacing:-0.05px;top:791.1px;font-size:21.3px;line-height:28px;color:#1c2b34;left:1896.7px;">Cluster</span>
<div class="b" style="left:1971.2px;top:789.3px;width:205.8px;height:31.7px;background:#fff;border:1.5px solid #e6e9ed;border-radius:16px;"></div>
<svg class="b" style="left:1981.0px;top:794.5px;" width="22" height="22" viewBox="0 0 24 24"><circle cx="6.500" cy="7" r="5" fill="#5b6770"/><circle cx="12" cy="16.500" r="5" fill="#5b6770"/><circle cx="17.500" cy="7" r="4" fill="none" stroke="#5b6770" stroke-width="1.800"/></svg>
<span class="t" style="letter-spacing:0.09px;top:793.8px;font-size:18.5px;line-height:24px;color:#1c2b34;left:2009.2px;">bad-lightgreen-bag</span>
<span class="t" style="letter-spacing:0.60px;top:791.1px;font-size:21.3px;line-height:28px;color:#1c2b34;left:2183.0px;">with attributes</span>
<div class="b" style="left:1896.7px;top:834.0px;width:974.1px;height:31.7px;background:#f1f3f6;border-radius:5px;"></div>
<span class="t" style="letter-spacing:0.14px;top:836.3px;font-size:21px;line-height:27px;color:#1c2b34;left:1903.2px;"><span style="color:#52606d;">@http.useragent:</span><span style="color:#14397d;">Mozilla/5.0 (Macintosh; Intel Mac OS X 10.15; rv:89.0) Gecko/20100101 Firefox/89.0</span></span>
<div class="b" style="left:2877.5px;top:834.0px;width:30.0px;height:30.0px;background:#fff;border:1.5px solid #cfd4dd;border-radius:5px;"></div>
<span class="t" style="top:837.5px;font-size:18px;line-height:23px;color:#3a4750;left:2892.5px;transform:translateX(-50%);">+</span>
<span class="t" style="letter-spacing:0.41px;top:881.3px;font-size:21.3px;line-height:28px;color:#1c2b34;left:1896.7px;">Traffic distribution:</span>
<div class="b" style="left:1896.7px;top:906.6px;width:181.5px;height:2.0px;background:repeating-linear-gradient(90deg,#6a7782 0 2px,transparent 2px 4.500px);"></div>
<span class="t" style="letter-spacing:0.06px;top:882.3px;font-size:20px;line-height:26px;color:#1c2b34;left:2109.9px;">86.3%</span>
<div class="b" style="left:2180.0px;top:885.1px;width:95.0px;height:19.0px;background:#dfe3ec;"></div>
<div class="b" style="left:2180.0px;top:885.1px;width:82.0px;height:19.0px;background:#3a97e8;"></div>
<span class="t" style="letter-spacing:0.04px;top:882.3px;font-size:20px;line-height:26px;color:#1c2b34;left:2281.7px;">157</span>
<div class="b" style="left:1714.0px;top:933.5px;width:1219.4px;height:1.5px;background:#e4e7eb;"></div>
<span class="t" style="letter-spacing:1.53px;top:962.7px;font-size:17.5px;line-height:23px;color:#2a8040;font-weight:700;left:1714.0px;">COMPROMISED</span>
<span class="t" style="letter-spacing:0.02px;top:991.8px;font-size:17.5px;line-height:23px;color:#2a8040;font-weight:700;left:1714.0px;">USERS</span>
<span class="t" style="letter-spacing:0.02px;top:975.5px;font-size:21.3px;line-height:28px;color:#1c2b34;left:1896.7px;">No users were <span style="font-weight:700;">compromised</span> out of <span style="font-weight:700;">0 targeted users</span></span>
<div class="b" style="left:1714.0px;top:1041.7px;width:1219.4px;height:1.5px;background:#e4e7eb;"></div>
<span class="t" style="letter-spacing:0.81px;top:1071.2px;font-size:17.5px;line-height:23px;color:#5b6770;font-weight:700;left:1714.0px;">SECURITY</span>
<span class="t" style="letter-spacing:0.01px;top:1099.9px;font-size:17.5px;line-height:23px;color:#5b6770;font-weight:700;left:1714.0px;">TRACES</span>
<div class="b" style="left:1896.7px;top:1072.6px;width:183.3px;height:36.5px;background:#fff;border:1.5px solid #e6e9ed;border-radius:19px;"></div>
<span class="t" style="letter-spacing:0.10px;top:1078.5px;font-size:19.5px;line-height:25px;color:#1c2b34;left:1910.5px;">1 successful login</span>
<span class="t" style="letter-spacing:-0.18px;top:1077.0px;font-size:21.3px;line-height:28px;color:#1c2b34;left:2086.8px;">out of</span>
<span class="t" style="letter-spacing:0.33px;top:1077.0px;font-size:21.3px;line-height:28px;color:#006bc2;left:2150.9px;">182 login attempts</span>
<div class="b" style="left:2847.0px;top:1068.4px;width:85.3px;height:43.2px;background:#fff;border:1.5px solid #cfd4dd;border-radius:5px;"></div>
<div class="b" style="left:2890.6px;top:1068.4px;width:41.7px;height:43.2px;background:#f5f6f8;border:1.5px solid #e2e5ea;border-radius:0 5px 5px 0;"></div>
<svg class="b" style="left:2856.5px;top:1078.0px;" width="25" height="25" viewBox="0 0 24 24"><circle cx="10.3" cy="10.3" r="6.8" fill="none" stroke="#3a4750" stroke-width="2" stroke-linecap="round" stroke-linejoin="round" /><path d="M15.4 15.4 21 21" fill="none" stroke="#3a4750" stroke-width="2" stroke-linecap="round" stroke-linejoin="round" /><path d="M7 10.300h6.600" fill="none" stroke="#3a4750" stroke-width="1.8" stroke-linecap="round" stroke-linejoin="round" /></svg>
<svg class="b" style="left:2900.0px;top:1078.5px;" width="23" height="23" viewBox="0 0 24 24"><path d="M4 12a8.300 8.300 0 1 0 2.800-6.200" fill="none" stroke="#a9b0b8" stroke-width="2" stroke-linecap="round" stroke-linejoin="round" /><path d="M3 3.500V8.500H8" fill="none" stroke="#a9b0b8" stroke-width="2" stroke-linecap="round" stroke-linejoin="round" /></svg>
<div class="b" style="left:1967.2px;top:1328.1px;width:958.1px;height:1.5px;background:#e9ebee;"></div>
<div class="b" style="left:1967.2px;top:1287.3px;width:958.1px;height:1.5px;background:#e9ebee;"></div>
<div class="b" style="left:1967.2px;top:1246.6px;width:958.1px;height:1.5px;background:#e9ebee;"></div>
<div class="b" style="left:1967.2px;top:1205.8px;width:958.1px;height:1.5px;background:#e9ebee;"></div>
<div class="b" style="left:1967.2px;top:1165.0px;width:958.1px;height:1.5px;background:#e9ebee;"></div>
<span class="t" style="top:1360.0px;font-size:16.5px;line-height:21px;color:#1c2b34;right:1837.4px;">0</span>
<span class="t" style="top:1319.3px;font-size:16.5px;line-height:21px;color:#1c2b34;right:1837.4px;">2</span>
<span class="t" style="top:1278.5px;font-size:16.5px;line-height:21px;color:#1c2b34;right:1837.4px;">4</span>
<span class="t" style="top:1237.7px;font-size:16.5px;line-height:21px;color:#1c2b34;right:1837.4px;">6</span>
<span class="t" style="top:1197.0px;font-size:16.5px;line-height:21px;color:#1c2b34;right:1837.4px;">8</span>
<span class="t" style="top:1156.2px;font-size:16.5px;line-height:21px;color:#1c2b34;right:1837.4px;">10</span>
<div class="b" style="left:2286.3px;top:1146.1px;width:319.9px;height:229.5px;background:rgba(236,84,72,.125);border:1.5px dashed #f3b4ae;border-bottom:none;"></div>
<div class="b" style="left:2277.6px;top:1328.8px;width:5.600px;height:40.8px;background:#3a97e8;"></div><div class="b" style="left:2284.7px;top:1328.8px;width:5.600px;height:40.8px;background:#3a97e8;"></div><div class="b" style="left:2291.8px;top:1308.5px;width:5.600px;height:61.1px;background:#3a97e8;"></div><div class="b" style="left:2298.9px;top:1308.5px;width:5.600px;height:61.1px;background:#3a97e8;"></div><div class="b" style="left:2306.0px;top:1206.6px;width:5.600px;height:163.0px;background:#3a97e8;"></div><div class="b" style="left:2313.1px;top:1308.5px;width:5.600px;height:61.1px;background:#3a97e8;"></div><div class="b" style="left:2320.2px;top:1206.6px;width:5.600px;height:163.0px;background:#3a97e8;"></div><div class="b" style="left:2327.3px;top:1206.6px;width:5.600px;height:163.0px;background:#3a97e8;"></div><div class="b" style="left:2334.5px;top:1308.5px;width:5.600px;height:61.1px;background:#3a97e8;"></div><div class="b" style="left:2341.6px;top:1226.9px;width:5.600px;height:142.7px;background:#3a97e8;"></div><div class="b" style="left:2348.7px;top:1247.3px;width:5.600px;height:122.3px;background:#3a97e8;"></div><div class="b" style="left:2355.8px;top:1349.2px;width:5.600px;height:20.4px;background:#3a97e8;"></div><div class="b" style="left:2362.9px;top:1267.7px;width:5.600px;height:101.9px;background:#3a97e8;"></div><div class="b" style="left:2362.9px;top:1247.3px;width:5.600px;height:20.4px;background:#9fcdfa;"></div><div class="b" style="left:2370.0px;top:1328.8px;width:5.600px;height:40.8px;background:#3a97e8;"></div><div class="b" style="left:2377.1px;top:1328.8px;width:5.600px;height:40.8px;background:#3a97e8;"></div><div class="b" style="left:2384.2px;top:1328.8px;width:5.600px;height:40.8px;background:#3a97e8;"></div><div class="b" style="left:2391.3px;top:1288.1px;width:5.600px;height:81.5px;background:#3a97e8;"></div><div class="b" style="left:2398.4px;top:1349.2px;width:5.600px;height:20.4px;background:#3a97e8;"></div><div class="b" style="left:2426.8px;top:1349.2px;width:5.600px;height:20.4px;background:#3a97e8;"></div><div class="b" style="left:2433.9px;top:1288.1px;width:5.600px;height:81.5px;background:#3a97e8;"></div><div class="b" style="left:2441.1px;top:1328.8px;width:5.600px;height:40.8px;background:#3a97e8;"></div><div class="b" style="left:2448.2px;top:1288.1px;width:5.600px;height:81.5px;background:#3a97e8;"></div><div class="b" style="left:2455.3px;top:1328.8px;width:5.600px;height:40.8px;background:#3a97e8;"></div><div class="b" style="left:2462.4px;top:1328.8px;width:5.600px;height:40.8px;background:#3a97e8;"></div><div class="b" style="left:2469.5px;top:1308.5px;width:5.600px;height:61.1px;background:#3a97e8;"></div><div class="b" style="left:2476.6px;top:1247.3px;width:5.600px;height:122.3px;background:#3a97e8;"></div><div class="b" style="left:2483.7px;top:1308.5px;width:5.600px;height:61.1px;background:#3a97e8;"></div><div class="b" style="left:2490.8px;top:1247.3px;width:5.600px;height:122.3px;background:#3a97e8;"></div><div class="b" style="left:2497.9px;top:1247.3px;width:5.600px;height:122.3px;background:#3a97e8;"></div><div class="b" style="left:2505.0px;top:1267.7px;width:5.600px;height:101.9px;background:#3a97e8;"></div><div class="b" style="left:2512.1px;top:1308.5px;width:5.600px;height:61.1px;background:#3a97e8;"></div><div class="b" style="left:2519.2px;top:1288.1px;width:5.600px;height:81.5px;background:#3a97e8;"></div><div class="b" style="left:2526.3px;top:1267.7px;width:5.600px;height:101.9px;background:#3a97e8;"></div><div class="b" style="left:2533.4px;top:1247.3px;width:5.600px;height:122.3px;background:#3a97e8;"></div><div class="b" style="left:2540.5px;top:1206.6px;width:5.600px;height:163.0px;background:#3a97e8;"></div><div class="b" style="left:2547.7px;top:1267.7px;width:5.600px;height:101.9px;background:#3a97e8;"></div><div class="b" style="left:2554.8px;top:1206.6px;width:5.600px;height:163.0px;background:#3a97e8;"></div><div class="b" style="left:2561.9px;top:1288.1px;width:5.600px;height:81.5px;background:#3a97e8;"></div><div class="b" style="left:2569.0px;top:1267.7px;width:5.600px;height:101.9px;background:#3a97e8;"></div><div class="b" style="left:2576.1px;top:1226.9px;width:5.600px;height:142.7px;background:#3a97e8;"></div><div class="b" style="left:2583.2px;top:1186.2px;width:5.600px;height:183.4px;background:#3a97e8;"></div><div class="b" style="left:2590.3px;top:1308.5px;width:5.600px;height:61.1px;background:#3a97e8;"></div>
<div class="b" style="left:1967.2px;top:1368.6px;width:958.1px;height:2.0px;background:#8b949d;"></div>
<div class="b" style="left:2286.3px;top:1369.6px;width:319.9px;height:6.0px;background:#f2747c;"></div>
<div class="b" style="left:2062.7px;top:1369.6px;width:1.8px;height:7.0px;background:#8b949d;"></div>
<span class="t" style="top:1378.7px;font-size:16.5px;line-height:21px;color:#1c2b34;left:2063.6px;transform:translateX(-50%);">20:50</span>
<div class="b" style="left:2169.3px;top:1369.6px;width:1.8px;height:7.0px;background:#8b949d;"></div>
<span class="t" style="top:1378.7px;font-size:16.5px;line-height:21px;color:#1c2b34;left:2170.2px;transform:translateX(-50%);">20:55</span>
<div class="b" style="left:2275.9px;top:1369.6px;width:1.8px;height:7.0px;background:#8b949d;"></div>
<span class="t" style="top:1378.7px;font-size:16.5px;line-height:21px;color:#1c2b34;left:2276.8px;transform:translateX(-50%);">21:00</span>
<div class="b" style="left:2382.6px;top:1369.6px;width:1.8px;height:7.0px;background:#8b949d;"></div>
<span class="t" style="top:1378.7px;font-size:16.5px;line-height:21px;color:#1c2b34;left:2383.5px;transform:translateX(-50%);">21:05</span>
<div class="b" style="left:2489.2px;top:1369.6px;width:1.8px;height:7.0px;background:#8b949d;"></div>
<span class="t" style="top:1378.7px;font-size:16.5px;line-height:21px;color:#1c2b34;left:2490.1px;transform:translateX(-50%);">21:10</span>
<div class="b" style="left:2595.8px;top:1369.6px;width:1.8px;height:7.0px;background:#8b949d;"></div>
<span class="t" style="top:1378.7px;font-size:16.5px;line-height:21px;color:#1c2b34;left:2596.7px;transform:translateX(-50%);">21:15</span>
<div class="b" style="left:2702.4px;top:1369.6px;width:1.8px;height:7.0px;background:#8b949d;"></div>
<span class="t" style="top:1378.7px;font-size:16.5px;line-height:21px;color:#1c2b34;left:2703.3px;transform:translateX(-50%);">21:20</span>
<div class="b" style="left:2809.0px;top:1369.6px;width:1.8px;height:7.0px;background:#8b949d;"></div>
<span class="t" style="top:1378.7px;font-size:16.5px;line-height:21px;color:#1c2b34;left:2809.9px;transform:translateX(-50%);">21:25</span>
<div class="b" style="left:2915.7px;top:1369.6px;width:1.8px;height:7.0px;background:#8b949d;"></div>
<span class="t" style="top:1378.7px;font-size:16.5px;line-height:21px;color:#1c2b34;left:2916.6px;transform:translateX(-50%);">21:30</span>
<div class="b" style="left:1952.0px;top:1422.4px;width:17.6px;height:17.6px;background:#9fcdfa;border-radius:3px;"></div>
<span class="t" style="letter-spacing:0.06px;top:1420.1px;font-size:17.5px;line-height:23px;color:#1c2b34;left:1979.0px;">successful_login_by_the_ip</span>
<div class="b" style="left:2220.9px;top:1422.4px;width:17.6px;height:17.6px;background:#3a97e8;border-radius:3px;"></div>
<span class="t" style="letter-spacing:0.14px;top:1420.1px;font-size:17.5px;line-height:23px;color:#1c2b34;left:2248.0px;">failed_login_by_ip</span>
<div class="b" style="left:3028.5px;top:456.2px;width:579.5px;height:623.3px;background:#0468c6;border-radius:15px;"></div>
<span class="t" style="letter-spacing:-0.21px;top:473.2px;font-size:21.5px;line-height:28px;color:#fff;font-weight:700;left:3047.0px;">NEXT STEPS</span>
<div class="b" style="left:3034.5px;top:517.7px;width:568.0px;height:192.3px;background:#fff;border-radius:8px;"></div>
<div class="b" style="left:3034.5px;top:717.3px;width:568.0px;height:356.0px;background:#fff;border-radius:8px;"></div>
<svg class="b" style="left:2974.0px;top:739.0px;" width="47" height="52" viewBox="0 0 47 52"><path d="M0 13.500H21V0L46.500 26 21 52V38.500H0z" fill="#0468c6"/></svg>
<span class="t" style="letter-spacing:0.12px;top:532.6px;font-size:20.5px;line-height:27px;color:#6a7782;font-weight:700;left:3059.4px;">Triage</span>
<div class="b" style="left:3059.4px;top:571.7px;width:517.6px;height:43.6px;background:#eaf6fc;border:1.8px solid #0468c6;border-radius:6px;"></div>
<span class="t" style="letter-spacing:-0.17px;top:581.3px;font-size:20px;line-height:26px;color:#0468c6;font-weight:700;left:3272.5px;">OPEN</span>
<svg class="b" style="left:3343.0px;top:588.5px;" width="15" height="11" viewBox="0 0 15 11"><path d="M0 0h15L7.500 9z" fill="#0468c6"/></svg>
<div class="b" style="left:3059.4px;top:628.7px;width:517.6px;height:43.6px;background:#fff;border:1.5px solid #d3d7de;border-radius:6px;"></div>
<svg class="b" style="left:3236.0px;top:638.5px;" width="25" height="24" viewBox="0 0 25 24"><circle cx="9" cy="6.500" r="3.700" fill="none" stroke="#3a4750" stroke-width="1.7" stroke-linecap="round" stroke-linejoin="round" /><path d="M3 21v-3.500a5 5 0 0 1 5-5h2a5 5 0 0 1 5 5V21z" fill="none" stroke="#3a4750" stroke-width="1.7" stroke-linecap="round" stroke-linejoin="round" /><path d="M20 8v7M16.500 11.500h7" fill="none" stroke="#3a4750" stroke-width="1.7" stroke-linecap="round" stroke-linejoin="round" /></svg>
<span class="t" style="letter-spacing:-0.12px;top:637.3px;font-size:21.3px;line-height:28px;color:#1c2b34;left:3272.0px;">Assign Signal</span>
<span class="t" style="letter-spacing:-0.23px;top:732.2px;font-size:20.5px;line-height:27px;color:#6a7782;font-weight:700;left:3059.4px;">Respond</span>
<div class="b" style="left:3059.4px;top:771.3px;width:517.6px;height:43.6px;background:#f8f9fa;border:1.5px solid #edeff1;border-radius:6px;"></div>
<svg class="b" style="left:3208.0px;top:780.5px;" width="25" height="25" viewBox="0 0 24 24"><path d="M3.800 9.500V14a8.200 8.200 0 0 0 16.400 0V9.500" fill="none" stroke="#b1b6bb" stroke-width="1.7" stroke-linecap="round" stroke-linejoin="round" /><path d="M9 11.800V3.200M12 11.300V1.800M15 11.800V3.200" fill="none" stroke="#b1b6bb" stroke-width="1.7" stroke-linecap="round" stroke-linejoin="round" /><path d="M7.200 13.300l3 2.700" fill="none" stroke="#b1b6bb" stroke-width="1.7" stroke-linecap="round" stroke-linejoin="round" /></svg>
<span class="t" style="letter-spacing:0.05px;top:779.9px;font-size:21.3px;line-height:28px;color:#b1b6bb;left:3245.0px;">Block Attacking IPs</span>
<div class="b" style="left:3059.4px;top:828.3px;width:517.6px;height:43.6px;background:#fff;border:1.5px solid #d3d7de;border-radius:6px;"></div>
<svg class="b" style="left:3224.0px;top:838.0px;" width="26" height="24" viewBox="0 0 25 24"><path d="M3 2.500h6.500v6H3zM6 8.500v7M9.500 5.500h6a4 4 0 0 1 4 4v3.500" fill="none" stroke="#3a4750" stroke-width="1.7" stroke-linecap="round" stroke-linejoin="round" /><circle cx="19.500" cy="16" r="2.800" fill="none" stroke="#3a4750" stroke-width="1.7" stroke-linecap="round" stroke-linejoin="round" /><path d="M6 15.500l3 3-3 3-3-3z" fill="none" stroke="#3a4750" stroke-width="1.7" stroke-linecap="round" stroke-linejoin="round" /></svg>
<span class="t" style="letter-spacing:0.08px;top:836.9px;font-size:21.3px;line-height:28px;color:#1c2b34;left:3260.5px;">Run a Workflow</span>
<span class="t" style="letter-spacing:0.21px;top:900.0px;font-size:20.5px;line-height:27px;color:#6a7782;font-weight:700;left:3059.4px;">Protect</span>
<div class="b" style="left:3059.4px;top:939.0px;width:517.6px;height:44.0px;background:#b9e0f3;border-radius:6px;"></div>
<svg class="b" style="left:3212.5px;top:948.5px;" width="25" height="25" viewBox="0 0 24 24"><path d="M3.800 9.500V14a8.200 8.200 0 0 0 16.400 0V9.500" fill="none" stroke="#fff" stroke-width="1.9" stroke-linecap="round" stroke-linejoin="round" /><path d="M9 11.800V3.200M12 11.300V1.800M15 11.800V3.200" fill="none" stroke="#fff" stroke-width="1.9" stroke-linecap="round" stroke-linejoin="round" /><path d="M7.200 13.300l3 2.700" fill="none" stroke="#fff" stroke-width="1.9" stroke-linecap="round" stroke-linejoin="round" /></svg>
<span class="t" style="letter-spacing:0.03px;top:947.7px;font-size:21.3px;line-height:28px;color:#fff;left:3248.5px;text-shadow:0 0 .6px #fff;">Block User Agents</span>
<svg class="b" style="left:3075.0px;top:1023.5px;" width="19" height="19" viewBox="0 0 24 24"><path d="M8.500 5 15.500 12 8.500 19" fill="none" stroke="#3a4750" stroke-width="2" stroke-linecap="round" stroke-linejoin="round" /></svg>
<span class="t" style="letter-spacing:0.19px;top:1019.8px;font-size:21.3px;line-height:28px;color:#1c2b34;left:3103.8px;">More actions</span>
<div class="b" style="left:1662.0px;top:1533.5px;width:1970.0px;height:1.5px;background:#e4e7eb;"></div>
<div class="b" style="left:1687.2px;top:1573.8px;width:1920.8px;height:400.0px;background:#fff;border:1.5px solid #e6e9ed;border-radius:10px 10px 0 0;"></div>
<svg class="b" style="left:1705.5px;top:1604.5px;" width="25" height="25" viewBox="0 0 24 24"><path d="M5 8.500 12 15.500 19 8.500" fill="none" stroke="#3a4750" stroke-width="2" stroke-linecap="round" stroke-linejoin="round" /></svg>
<span class="t" style="letter-spacing:-0.64px;top:1600.9px;font-size:24.5px;line-height:32px;color:#1c2b34;font-weight:700;left:1742.7px;">Attacking Users and IPs</span>
<div class="b" style="left:1687.2px;top:1659.4px;width:1920.8px;height:1.8px;background:#dfe2e7;"></div>
<div class="b" style="left:1701.0px;top:1687.2px;width:43.0px;height:43.0px;background:#dfe3ec;border-radius:22px;"></div>
<div class="b" style="left:1711.7px;top:1697.9px;width:21.6px;height:21.6px;background:#6a7077;border-radius:11px;"></div>
<span class="t" style="top:1698.3px;font-size:17px;line-height:22px;color:#fff;font-weight:700;left:1722.5px;transform:translateX(-50%);">?</span>
<span class="t" style="letter-spacing:0.09px;top:1695.2px;font-size:21.3px;line-height:28px;color:#1c2b34;left:1757.7px;">Adding IPs and Users to Denylist does not guarantee they are blocked,</span>
<span class="t" style="letter-spacing:0.19px;top:1695.2px;font-size:21.3px;line-height:28px;color:#006bc2;left:2442.0px;">Activate Threat Protection</span>
<svg class="b" style="left:2697.0px;top:1697.5px;" width="21" height="21" viewBox="0 0 24 24"><path d="M10 3.500H3.500v17h17V14M14 3h7v7M21 3l-9.500 9.500" fill="none" stroke="#006bc2" stroke-width="2" stroke-linecap="round" stroke-linejoin="round" /></svg>
<span class="t" style="letter-spacing:0.19px;top:1695.2px;font-size:21.3px;line-height:28px;color:#1c2b34;left:2722.9px;">on all enabled services for blocking to be effective.</span>
<div class="b" style="left:1687.2px;top:1755.5px;width:1920.8px;height:1.8px;background:#dfe2e7;"></div>
<svg class="b" style="left:1714.5px;top:1789.8px;" width="23.5" height="23.5" viewBox="0 0 24 24"><circle cx="12" cy="12" r="9.500" fill="none" stroke="#3a4750" stroke-width="1.6" stroke-linecap="round" stroke-linejoin="round" /><ellipse cx="12" cy="12" rx="4.300" ry="9.500" fill="none" stroke="#3a4750" stroke-width="1.6" stroke-linecap="round" stroke-linejoin="round" /><path d="M2.500 12h19" fill="none" stroke="#3a4750" stroke-width="1.6" stroke-linecap="round" stroke-linejoin="round" /></svg>
<span class="t" style="letter-spacing:-0.23px;top:1787.7px;font-size:21.3px;line-height:28px;color:#1c2b34;font-weight:700;left:1745.7px;">Attacking IP</span>
<div class="b" style="left:1880.0px;top:1786.3px;width:29.7px;height:29.7px;background:#dfe3ec;border-radius:15px;"></div>
<span class="t" style="top:1791.1px;font-size:17px;line-height:22px;color:#3a4750;left:1894.9px;transform:translateX(-50%);">1</span>
<div class="b" style="left:2734.0px;top:1784.0px;width:191.2px;height:36.5px;background:#f8f9fa;border:1.5px solid #edeff1;border-radius:5px;"></div>
<svg class="b" style="left:2748.0px;top:1790.5px;" width="23" height="23" viewBox="0 0 24 24"><path d="M3.800 9.500V14a8.200 8.200 0 0 0 16.400 0V9.500" fill="none" stroke="#b1b6bb" stroke-width="1.7" stroke-linecap="round" stroke-linejoin="round" /><path d="M9 11.800V3.200M12 11.300V1.800M15 11.800V3.200" fill="none" stroke="#b1b6bb" stroke-width="1.7" stroke-linecap="round" stroke-linejoin="round" /><path d="M7.200 13.300l3 2.700" fill="none" stroke="#b1b6bb" stroke-width="1.7" stroke-linecap="round" stroke-linejoin="round" /></svg>
<span class="t" style="letter-spacing:-0.02px;top:1790.2px;font-size:19.5px;line-height:25px;color:#b1b6bb;left:2779.0px;">Block Selection</span>
<div class="b" style="left:2939.0px;top:1784.0px;width:255.3px;height:36.5px;background:#fff;border:1.5px solid #d3d7de;border-radius:5px;"></div>
<span class="t" style="letter-spacing:0.19px;top:1790.2px;font-size:19.5px;line-height:25px;color:#1c2b34;left:2952.5px;">Showing All Attackers</span>
<svg class="b" style="left:3169.5px;top:1798.5px;" width="13" height="9" viewBox="0 0 13 9"><path d="M0 0h13L6.500 8z" fill="#3a4750"/></svg>
<div class="b" style="left:3207.8px;top:1784.0px;width:178.2px;height:36.5px;background:#fff;border:1.5px solid #d3d7de;border-radius:5px;"></div>
<svg class="b" style="left:3220.5px;top:1790.5px;" width="22" height="22" viewBox="0 0 24 24"><path d="M12 15V3.500M7.500 7.500 12 3l4.500 4.500" fill="none" stroke="#3a4750" stroke-width="1.7" stroke-linecap="round" stroke-linejoin="round" /><path d="M3.500 14.500V20.500h17v-6" fill="none" stroke="#3a4750" stroke-width="1.7" stroke-linecap="round" stroke-linejoin="round" /></svg>
<span class="t" style="letter-spacing:-0.27px;top:1790.2px;font-size:19.5px;line-height:25px;color:#1c2b34;left:3253.0px;">Export to CSV</span>
<div class="b" style="left:3399.3px;top:1784.0px;width:182.7px;height:36.5px;background:#fff;border:1.5px solid #d3d7de;border-radius:5px;"></div>
<span class="t" style="letter-spacing:0.09px;top:1790.2px;font-size:19.5px;line-height:25px;color:#1c2b34;left:3413.0px;">Copy Attacking IP</span>
<div class="b" style="left:1714.0px;top:1834.3px;width:1868.0px;height:200.0px;background:#fff;border:1.5px solid #e6e9ed;border-radius:6px 6px 0 0;"></div>
<span class="t" style="letter-spacing:0.58px;top:1844.9px;font-size:17.5px;line-height:23px;color:#1c2b34;font-weight:700;left:1726.3px;">IP</span>
<svg class="b" style="left:2746.0px;top:1843.5px;" width="23" height="24" viewBox="0 0 24 24"><path d="M6 2.500V20M1.500 15.500 6 20.500l4.500-5" fill="none" stroke="#1c2b34" stroke-width="2" stroke-linecap="round" stroke-linejoin="round" /><path d="M12 3.500h10M12 8h7M12 12.500h4" fill="none" stroke="#1c2b34" stroke-width="2" stroke-linecap="round" stroke-linejoin="round" stroke-linecap='butt'/></svg>
<span class="t" style="letter-spacing:-0.23px;top:1844.9px;font-size:17.5px;line-height:23px;color:#1c2b34;font-weight:700;left:2779.5px;">SECURITY TRACES</span>
<span class="t" style="letter-spacing:-0.08px;top:1844.9px;font-size:17.5px;line-height:23px;color:#1c2b34;font-weight:700;left:2964.0px;">DETAILS</span>
<span class="t" style="letter-spacing:0.36px;top:1844.9px;font-size:17.5px;line-height:23px;color:#1c2b34;font-weight:700;left:3487.7px;">ACTIONS</span>
<div class="b" style="left:1714.0px;top:1876.7px;width:1868.0px;height:1.8px;background:#dfe2e7;"></div>
<div class="b" style="left:1721.5px;top:1885.8px;width:167.7px;height:30.9px;background:#fff;border:1.5px solid #e6e9ed;border-radius:16px;"></div>
<div class="b" style="left:1732px;top:1895.300px;width:18px;height:12px;border-radius:2px;overflow:hidden;background:repeating-linear-gradient(180deg,#d8343f 0 1.700px,#f4f4f4 1.700px 3.400px);"><div class="b" style="left:0;top:0;width:8px;height:6.500px;background:#3c4f96;"></div></div>
<span class="t" style="letter-spacing:-0.11px;top:1890.4px;font-size:17.5px;line-height:23px;color:#1c2b34;left:1758.8px;">165.227.8.8</span>
<svg class="b" style="left:1858.5px;top:1890.5px;" width="22" height="22" viewBox="0 0 24 24"><path d="M1.500 12C4 7 7.800 4.800 12 4.800S20 7 22.500 12C20 17 16.200 19.200 12 19.200S4 17 1.500 12z" fill="none" stroke="#1a4fb0" stroke-width="1.9" stroke-linecap="round" stroke-linejoin="round" /><circle cx="12" cy="12" r="3.800" fill="none" stroke="#1a4fb0" stroke-width="1.9" stroke-linecap="round" stroke-linejoin="round" /></svg>
<span class="t" style="letter-spacing:-0.65px;top:1891.5px;font-size:21.3px;line-height:28px;color:#006bc2;left:2740.4px;">182</span>
<span class="t" style="letter-spacing:0.19px;top:1891.5px;font-size:21.3px;line-height:28px;color:#1c2b34;left:2959.5px;">No blocking data.</span>
<div class="b" style="left:3468.3px;top:1886.5px;width:105.1px;height:35.5px;background:#f8f9fa;border:1.5px solid #edeff1;border-radius:5px;"></div>
<svg class="b" style="left:3480.5px;top:1892.5px;" width="23" height="23" viewBox="0 0 24 24"><path d="M3.800 9.500V14a8.200 8.200 0 0 0 16.400 0V9.500" fill="none" stroke="#b1b6bb" stroke-width="1.7" stroke-linecap="round" stroke-linejoin="round" /><path d="M9 11.800V3.200M12 11.300V1.800M15 11.800V3.200" fill="none" stroke="#b1b6bb" stroke-width="1.7" stroke-linecap="round" stroke-linejoin="round" /><path d="M7.200 13.300l3 2.700" fill="none" stroke="#b1b6bb" stroke-width="1.7" stroke-linecap="round" stroke-linejoin="round" /></svg>
<span class="t" style="letter-spacing:0.06px;top:1892.5px;font-size:19.5px;line-height:25px;color:#b1b6bb;left:3513.0px;">Block</span>
</div>
</body></html>
